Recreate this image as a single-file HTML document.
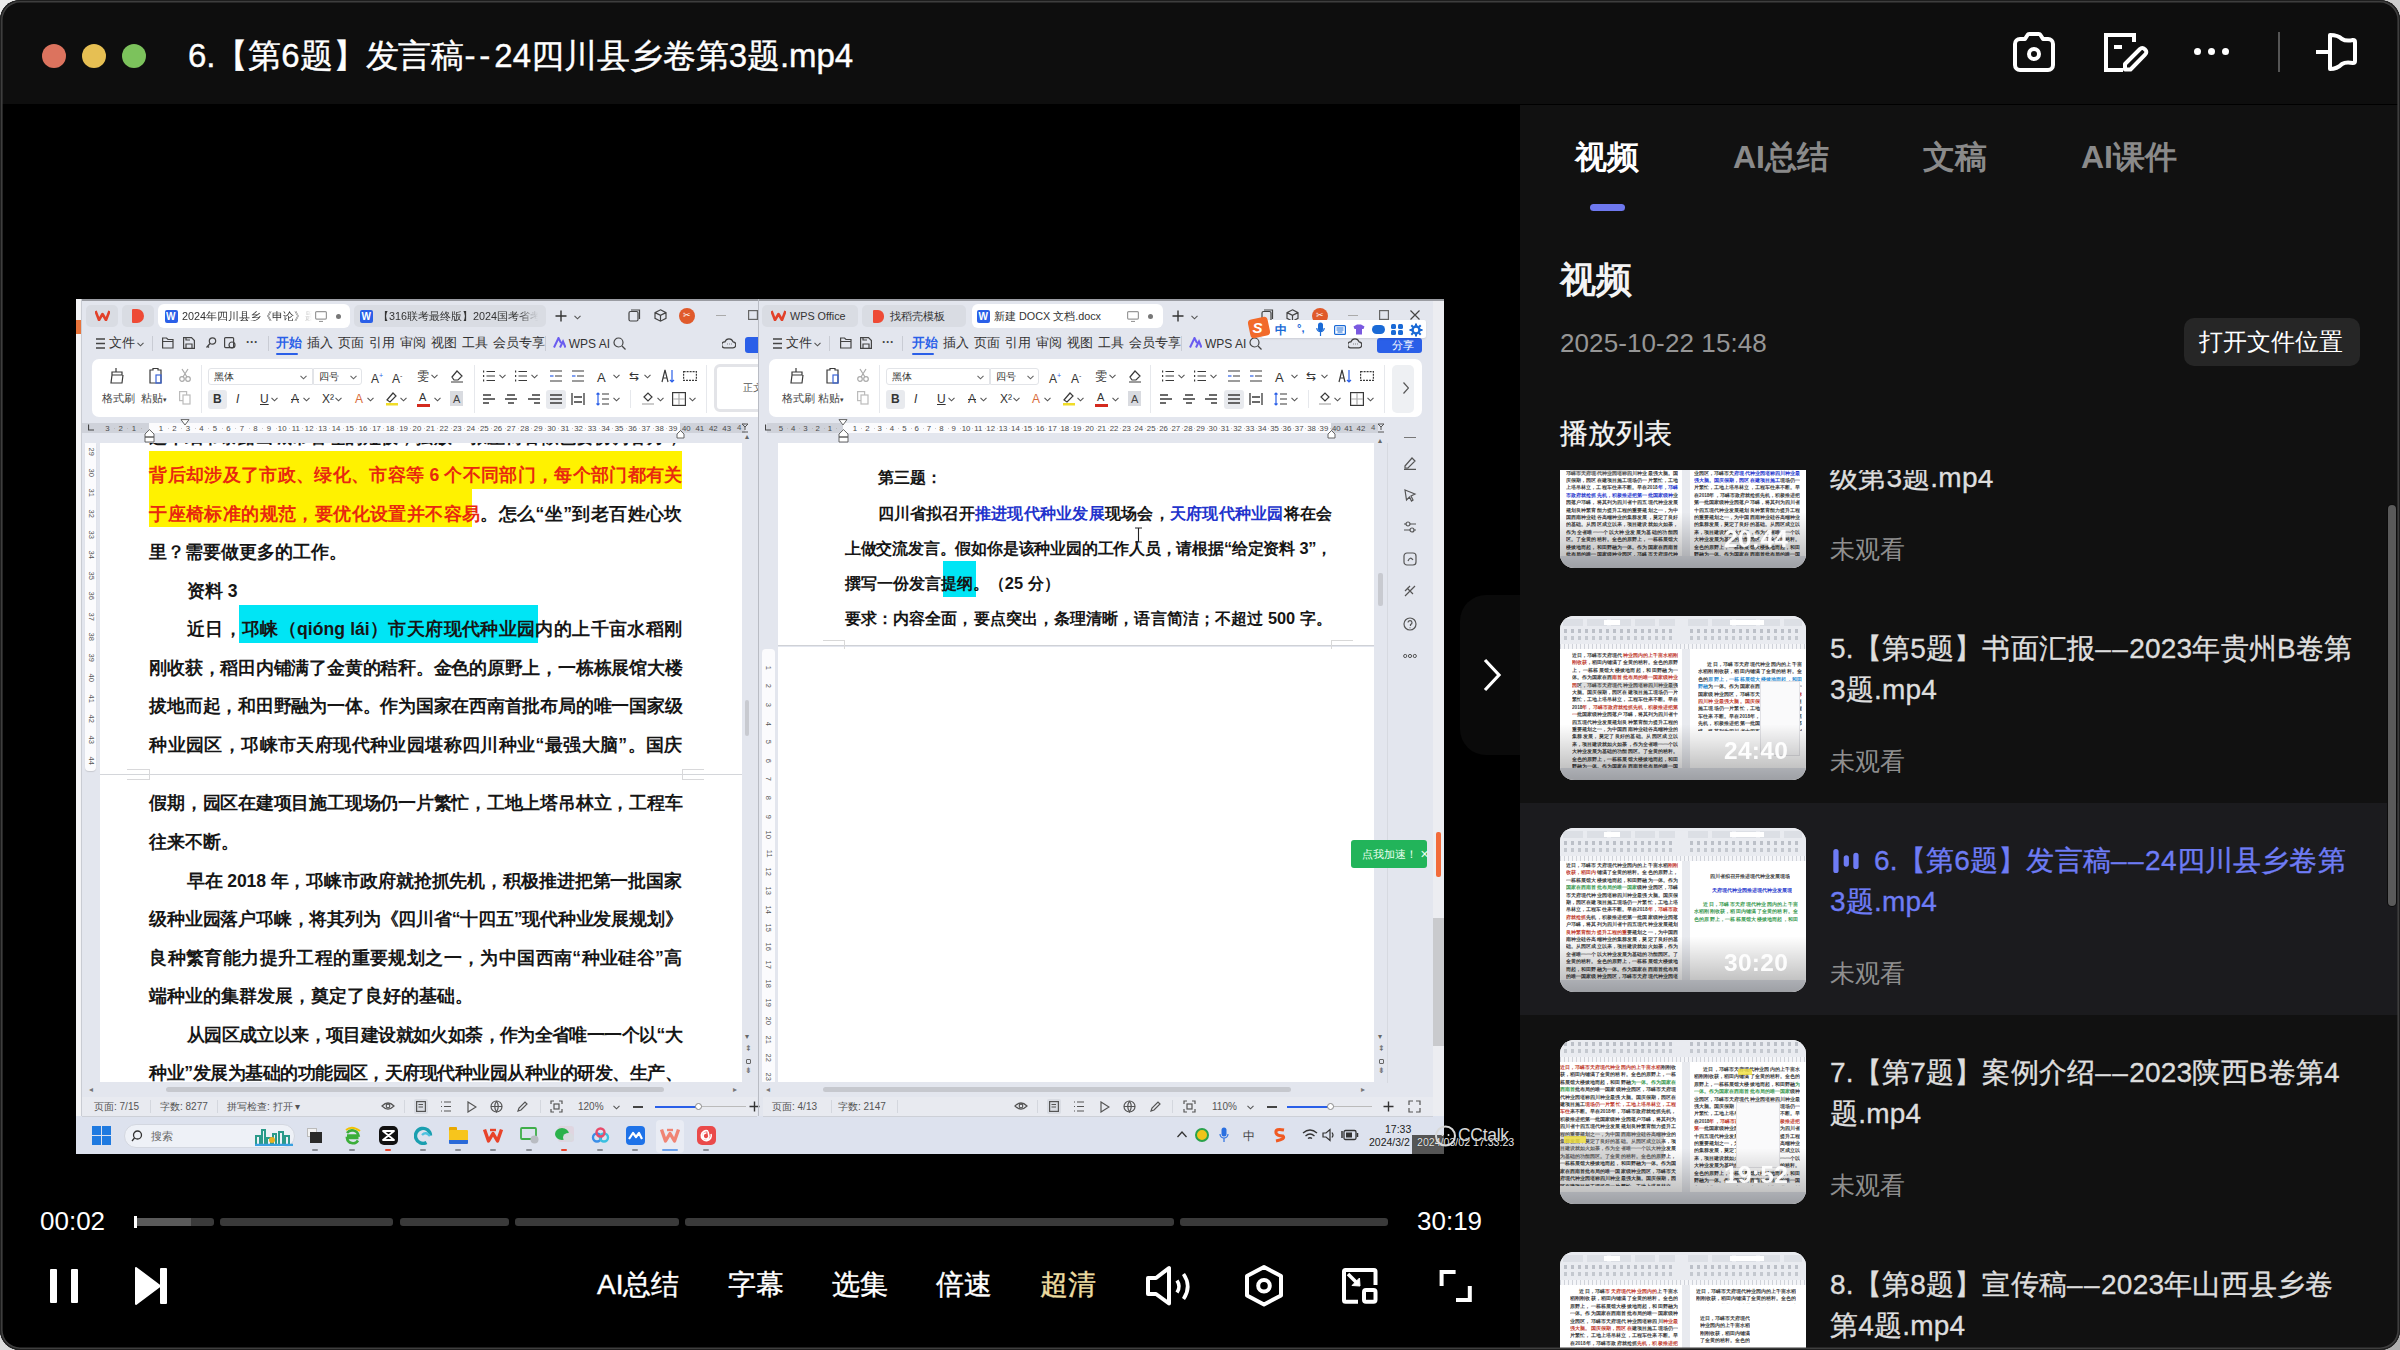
<!DOCTYPE html>
<html><head><meta charset="utf-8">
<style>
*{margin:0;padding:0;box-sizing:border-box}
html,body{width:2400px;height:1350px;overflow:hidden;background:linear-gradient(135deg,#ececec 0%,#d0d0d0 60%,#b0b0b0 100%);font-family:"Liberation Sans",sans-serif}
.a{position:absolute}
#win{position:absolute;left:0;top:0;width:2400px;height:1350px;border-radius:20px;overflow:hidden;background:#000}
#bord{position:absolute;left:0;top:0;width:2400px;height:1350px;border-radius:20px;box-shadow:inset 0 0 0 1px #1e1e1e,inset 0 0 0 2.6px #3e3e3e}
#tb{left:0;top:0;width:2400px;height:104px;background:#0e0e0e}
.dot{width:24px;height:24px;border-radius:50%;top:44px}
#ttl{left:188px;top:34px;font-size:33px;color:#fff;white-space:nowrap;letter-spacing:-0.05px;font-weight:500;-webkit-text-stroke:0.4px #fff}
#side{left:1520px;top:105px;width:880px;height:1245px;background:#111}
.tab{top:136px;font-size:32px;color:#8a8a8a;white-space:nowrap;font-weight:bold}
.ctl{top:1266px;font-size:28px;color:#fff;white-space:nowrap;font-weight:500;-webkit-text-stroke:0.4px currentColor}
.seg{top:1218px;height:8px;background:#3a3a3a;border-radius:3px}

.t{white-space:nowrap}
.tp{overflow:hidden;font-weight:bold;word-break:break-all;text-align:justify}
.item{width:880px;height:212px}
.item.act{background:#1b1b1e}
.th{position:absolute;left:0;top:0;width:246px;height:164px;border-radius:14px;overflow:hidden;background:#fff}
.tbi{height:6px;background:repeating-linear-gradient(90deg,#9aa0aa 0 4px,transparent 4px 9px)}
.ln{background:repeating-linear-gradient(180deg,#3a3a3a 0 3px,transparent 3px 7.4px)}
.lnr{background:repeating-linear-gradient(180deg,#c0392b 0 3px,transparent 3px 7.4px);mix-blend-mode:normal}
.ln2{background:repeating-linear-gradient(180deg,#777 0 2.5px,transparent 2.5px 7.4px)}
.ln3{background:repeating-linear-gradient(180deg,#3a9a50 0 2.5px,transparent 2.5px 7.4px)}
.shade{left:0;top:0;width:246px;height:164px;background:linear-gradient(180deg,rgba(0,0,0,0) 62%,rgba(0,0,0,.45) 100%)}
.dur{left:164px;top:121px;font-size:24.5px;font-weight:bold;color:#fff;opacity:.95;letter-spacing:0.3px}
.ititle{left:310px;top:37px;width:560px;font-size:28px;line-height:41px;color:#dedede;white-space:nowrap;font-weight:500;letter-spacing:0.2px;-webkit-text-stroke:0.35px currentColor}
.dd{letter-spacing:1.5px}
.iwatch{left:310px;top:154px;font-size:25px;color:#8f8f8f}
</style></head><body>
<div id="win">
  <div id="tb" class="a">
    <div class="a dot" style="left:42px;background:#dc735e"></div>
    <div class="a dot" style="left:82px;background:#e6bf53"></div>
    <div class="a dot" style="left:122px;background:#7cc25c"></div>
    <div id="ttl" class="a">6.【第6题】发言稿<span style="letter-spacing:4px">--</span>24四川县乡卷第3题.mp4</div>
  </div>
  <div class="a" style="left:0;top:104px;width:2400px;height:2px;background:#000"></div>
  <!-- video area -->
  <div id="video" class="a" style="left:0;top:106px;width:1520px;height:1244px;background:#000"></div>
  <div id="frame" class="a" style="left:76px;top:299px;width:1368px;height:855px;background:#e4e7ef;overflow:hidden"><div class="a" style="left:6.0px;top:0.0px;width:676.0px;height:817.0px;background:#e3e6ee"></div><div class="a" style="left:10.0px;top:5.7px;width:32.0px;height:22.6px;background:#d9dce3;border-radius:5px"></div><svg class="a" style="left:19.0px;top:11.0px" width="15" height="11" viewBox="0 0 15 11" fill="none" stroke="#3a3a3a" stroke-width="1.2"><path d="M0.5 1 L4 10 L7.5 4 L11 10 L14.5 1" stroke="#e2412a" stroke-width="2.6" stroke-linejoin="round"/></svg><div class="a" style="left:46.0px;top:5.7px;width:32.0px;height:22.6px;background:#d9dce3;border-radius:5px"></div><div class="a" style="left:56.0px;top:10.0px;width:12.0px;height:14.0px;background:#ee4a35;border-radius:1px 7px 7px 1px"></div><div class="a" style="left:82.0px;top:5.0px;width:192.0px;height:24.0px;background:#fff;border-radius:6px"></div><div class="a" style="left:88.5px;top:11.3px;width:13.0px;height:13.0px;background:#2a5fe8;border-radius:2px"></div><div class="a t" style="left:90.0px;top:12.8px;font-size:10.0px;line-height:10.0px;color:#fff;font-weight:bold">W</div><div class="a t" style="left:106.0px;top:11.6px;font-size:10.8px;line-height:10.8px;color:#333;width:130px;overflow:hidden;-webkit-mask-image:linear-gradient(90deg,#000 85%,transparent)">2024年四川县乡《申论》题.docx</div><svg class="a" style="left:239.0px;top:12.0px" width="12" height="11" viewBox="0 0 12 11" fill="none" stroke="#3a3a3a" stroke-width="1.2"><rect x="0.6" y="0.6" width="10.8" height="7.5" rx="1" stroke="#999"/><path d="M4 10.5 H8" stroke="#999"/></svg><div class="a" style="left:260.0px;top:14.5px;width:5.0px;height:5.0px;background:#777;border-radius:50%"></div><div class="a" style="left:278.0px;top:5.7px;width:192.0px;height:22.6px;background:#d9dce3;border-radius:5px"></div><div class="a" style="left:284.0px;top:11.3px;width:13.0px;height:13.0px;background:#2a5fe8;border-radius:2px"></div><div class="a t" style="left:285.5px;top:12.8px;font-size:10.0px;line-height:10.0px;color:#fff;font-weight:bold">W</div><div class="a t" style="left:302.0px;top:11.6px;font-size:10.8px;line-height:10.8px;color:#333;width:160px;overflow:hidden;white-space:nowrap;-webkit-mask-image:linear-gradient(90deg,#000 88%,transparent)">【316联考最终版】2024国考省考金融</div><svg class="a" style="left:479.0px;top:11.0px" width="12" height="12" viewBox="0 0 12 12" fill="none" stroke="#3a3a3a" stroke-width="1.2"><path d="M6 0.5 V11.5 M0.5 6 H11.5" stroke="#333" stroke-width="1.4"/></svg><svg class="a" style="left:498.0px;top:16.0px" width="7" height="5" viewBox="0 0 7 5" fill="none" stroke="#3a3a3a" stroke-width="1.2"><path d="M0.5 0.8 L3.5 3.8 L6.5 0.8" stroke="#555" stroke-width="1.1"/></svg><svg class="a" style="left:552.0px;top:10.0px" width="13" height="13" viewBox="0 0 13 13" fill="none" stroke="#3a3a3a" stroke-width="1.2"><rect x="1" y="2.5" width="9" height="9.5" rx="1.5" stroke="#444"/><path d="M3 1 H11.5 V10" stroke="#444"/></svg><svg class="a" style="left:578.0px;top:10.0px" width="13" height="13" viewBox="0 0 13 13" fill="none" stroke="#3a3a3a" stroke-width="1.2"><path d="M6.5 0.8 L12 3.6 V9.4 L6.5 12.2 L1 9.4 V3.6 Z M1 3.6 L6.5 6.4 L12 3.6 M6.5 6.4 V12.2" stroke="#444"/></svg><div class="a" style="left:603.0px;top:8.5px;width:16.0px;height:16.0px;background:#e05a2b;border-radius:50%"></div><div class="a t" style="left:607.0px;top:12.0px;font-size:9.0px;line-height:9.0px;color:#fff">✂</div><div class="a" style="left:640.0px;top:16.0px;width:10.0px;height:1.2px;background:#aaa"></div><svg class="a" style="left:672.0px;top:11.0px" width="10" height="10" viewBox="0 0 10 10" fill="none" stroke="#3a3a3a" stroke-width="1.2"><rect x="0.6" y="0.6" width="8.8" height="8.8" stroke="#666"/></svg><svg class="a" style="left:20.0px;top:38.5px" width="9" height="11" viewBox="0 0 9 11" fill="none" stroke="#3a3a3a" stroke-width="1.2"><path d="M0 1 H9 M0 5.5 H9 M0 10 H9" stroke="#444" stroke-width="1.3"/></svg><div class="a t" style="left:33.0px;top:38.2px;font-size:12.5px;line-height:12.5px;color:#333">文件</div><svg class="a" style="left:61.0px;top:43.0px" width="7" height="5" viewBox="0 0 7 5" fill="none" stroke="#3a3a3a" stroke-width="1.2"><path d="M0.5 0.8 L3.5 3.8 L6.5 0.8" stroke="#555" stroke-width="1.1"/></svg><div class="a" style="left:76.0px;top:37.0px;width:1.0px;height:15.0px;background:#c9ccd4"></div><svg class="a" style="left:86.0px;top:38.0px" width="12" height="12" viewBox="0 0 12 12" fill="none" stroke="#3a3a3a" stroke-width="1.2"><path d="M0.6 1 H4.5 L6 2.5 H11 V11 H0.6 Z M0.6 4.5 H11" stroke="#444"/></svg><svg class="a" style="left:107.0px;top:38.0px" width="12" height="12" viewBox="0 0 12 12" fill="none" stroke="#3a3a3a" stroke-width="1.2"><path d="M0.6 0.6 H8.5 L11.4 3.5 V11.4 H0.6 Z M3 11.4 V7 H9 V11.4 M3 0.6 V3 H7" stroke="#444"/></svg><svg class="a" style="left:129.0px;top:38.0px" width="12" height="12" viewBox="0 0 12 12" fill="none" stroke="#3a3a3a" stroke-width="1.2"><circle cx="7.5" cy="4" r="3.2" stroke="#444"/><path d="M5 6.5 L1.5 10.5 M2.5 9 L4 10.5" stroke="#444"/></svg><svg class="a" style="left:148.0px;top:38.0px" width="13" height="12" viewBox="0 0 13 12" fill="none" stroke="#3a3a3a" stroke-width="1.2"><rect x="0.6" y="0.6" width="9" height="10" rx="1" stroke="#444"/><circle cx="8" cy="8" r="3" stroke="#444"/></svg><div class="a t" style="left:170.0px;top:37.0px;font-size:12.0px;line-height:12.0px;color:#444;font-weight:bold">···</div><div class="a" style="left:192.0px;top:37.0px;width:1.0px;height:15.0px;background:#c9ccd4"></div><div class="a t" style="left:199.7px;top:38.2px;font-size:12.5px;line-height:12.5px;color:#2a5fe8;font-weight:bold">开始</div><div class="a t" style="left:230.7px;top:38.2px;font-size:12.5px;line-height:12.5px;color:#333">插入</div><div class="a t" style="left:261.7px;top:38.2px;font-size:12.5px;line-height:12.5px;color:#333">页面</div><div class="a t" style="left:292.7px;top:38.2px;font-size:12.5px;line-height:12.5px;color:#333">引用</div><div class="a t" style="left:323.7px;top:38.2px;font-size:12.5px;line-height:12.5px;color:#333">审阅</div><div class="a t" style="left:354.7px;top:38.2px;font-size:12.5px;line-height:12.5px;color:#333">视图</div><div class="a t" style="left:385.7px;top:38.2px;font-size:12.5px;line-height:12.5px;color:#333">工具</div><div class="a t" style="left:416.7px;top:38.2px;font-size:12.5px;line-height:12.5px;color:#333">会员专享</div><div class="a" style="left:199.7px;top:53.8px;width:22.0px;height:2.0px;background:#2a5fe8;border-radius:1px"></div><div class="a" style="left:468.7px;top:37.0px;width:1.0px;height:15.0px;background:#c9ccd4"></div><svg class="a" style="left:476.7px;top:38.0px" width="13" height="11" viewBox="0 0 13 11" fill="none" stroke="#3a3a3a" stroke-width="1.2"><path d="M1 10.5 L5.5 1 L8 6 M7 10.5 L10 4.5 L12.5 10.5" stroke="#6a5cf0" stroke-width="2"/></svg><div class="a t" style="left:492.7px;top:38.5px;font-size:12.0px;line-height:12.0px;color:#333">WPS AI</div><svg class="a" style="left:536.7px;top:38.0px" width="13" height="13" viewBox="0 0 13 13" fill="none" stroke="#3a3a3a" stroke-width="1.2"><circle cx="5.5" cy="5.5" r="4.5" stroke="#444"/><path d="M9 9 L12.5 12.5" stroke="#444"/></svg><svg class="a" style="left:646.0px;top:38.0px" width="14" height="12" viewBox="0 0 14 12" fill="none" stroke="#3a3a3a" stroke-width="1.2"><path d="M3.5 10.8 H10.5 a3 3 0 0 0 0.5 -6 a4.2 4.2 0 0 0 -8 0 a3 3 0 0 0 -0.5 6 Z" stroke="#444"/><path d="M5 7 h0.6 M7 7 h0.6 M9 7 h0.6" stroke="#444"/></svg><div class="a" style="left:669.0px;top:38.0px;width:20.0px;height:16.0px;background:#2a5fe8;border-radius:3px"></div><div class="a" style="left:16.0px;top:60.2px;width:678.0px;height:58.3px;background:#fff;border-radius:7px"></div><svg class="a" style="left:33.0px;top:68.0px" width="16" height="18" viewBox="0 0 16 18" fill="none" stroke="#3a3a3a" stroke-width="1.2"><path d="M7 1 V5 M3 5 H13 V8 H3 Z M3 8 L2 16 H13 L14 8" stroke="#3a3a3a"/></svg><div class="a t" style="left:26.0px;top:94.2px;font-size:10.5px;line-height:10.5px;color:#444">格式刷</div><svg class="a" style="left:72.0px;top:68.0px" width="16" height="18" viewBox="0 0 16 18" fill="none" stroke="#3a3a3a" stroke-width="1.2"><path d="M2 3 H5 V1.5 H10 V3 H13 V16 H2 Z" stroke="#3a3a3a"/><rect x="8" y="8" width="5" height="8" stroke="#3a64d8"/></svg><div class="a t" style="left:65.0px;top:94.2px;font-size:10.5px;line-height:10.5px;color:#444">粘贴<span style="font-size:7px">▾</span></div><svg class="a" style="left:103.0px;top:69.0px" width="12" height="14" viewBox="0 0 12 14" fill="none" stroke="#3a3a3a" stroke-width="1.2"><circle cx="3" cy="11" r="2.3" stroke="#aaa"/><circle cx="9" cy="11" r="2.3" stroke="#aaa"/><path d="M4 9 L9 1 M8 9 L3 1" stroke="#aaa"/></svg><svg class="a" style="left:103.0px;top:92.0px" width="12" height="14" viewBox="0 0 12 14" fill="none" stroke="#3a3a3a" stroke-width="1.2"><rect x="0.6" y="0.6" width="7" height="9" stroke="#bbb"/><rect x="4" y="4" width="7" height="9" stroke="#bbb" fill="#fff"/></svg><div class="a" style="left:125.4px;top:66.0px;width:1.0px;height:48.0px;background:#e6e8ec"></div><div class="a" style="left:132.4px;top:68.7px;width:104.9px;height:17.7px;border:1px solid #e2e4e8;border-radius:3px 0 0 3px"></div><div class="a t" style="left:138.4px;top:72.5px;font-size:10.0px;line-height:10.0px;color:#333">黑体</div><svg class="a" style="left:224.3px;top:76.0px" width="7" height="5" viewBox="0 0 7 5" fill="none" stroke="#3a3a3a" stroke-width="1.2"><path d="M0.5 0.8 L3.5 3.8 L6.5 0.8" stroke="#666" stroke-width="1.1"/></svg><div class="a" style="left:237.3px;top:68.7px;width:49.0px;height:17.7px;border:1px solid #e2e4e8;border-radius:0 3px 3px 0"></div><div class="a t" style="left:243.3px;top:72.5px;font-size:10.0px;line-height:10.0px;color:#333">四号</div><svg class="a" style="left:274.3px;top:76.0px" width="7" height="5" viewBox="0 0 7 5" fill="none" stroke="#3a3a3a" stroke-width="1.2"><path d="M0.5 0.8 L3.5 3.8 L6.5 0.8" stroke="#666" stroke-width="1.1"/></svg><div class="a t" style="left:295.0px;top:71.4px;font-size:12.0px;line-height:12.0px;color:#333">A<sup style="font-size:7px;color:#2a5fe8">+</sup></div><div class="a t" style="left:316.0px;top:71.4px;font-size:12.0px;line-height:12.0px;color:#333">A<sup style="font-size:7px">-</sup></div><div class="a t" style="left:341.0px;top:71.4px;font-size:12.0px;line-height:12.0px;color:#333">雯</div><svg class="a" style="left:355.0px;top:75.4px" width="7" height="5" viewBox="0 0 7 5" fill="none" stroke="#3a3a3a" stroke-width="1.2"><path d="M0.5 0.8 L3.5 3.8 L6.5 0.8" stroke="#555" stroke-width="1.1"/></svg><svg class="a" style="left:374.0px;top:70.0px" width="14" height="14" viewBox="0 0 14 14" fill="none" stroke="#3a3a3a" stroke-width="1.2"><path d="M2 8 L7 2 L12 7 L8 11 H4 Z M1 13 H13" stroke="#3a3a3a"/></svg><div class="a" style="left:398.0px;top:66.0px;width:1.0px;height:48.0px;background:#e6e8ec"></div><svg class="a" style="left:406.0px;top:71.0px" width="14" height="12" viewBox="0 0 14 12" fill="none" stroke="#3a3a3a" stroke-width="1.2"><path d="M1 1.5 h1.2 M1 6 h1.2 M1 10.5 h1.2" stroke="#3a3a3a" stroke-width="1.8"/><path d="M4.5 1.5 H13 M4.5 6 H13 M4.5 10.5 H13" stroke="#3a3a3a"/></svg><svg class="a" style="left:423.0px;top:75.4px" width="7" height="5" viewBox="0 0 7 5" fill="none" stroke="#3a3a3a" stroke-width="1.2"><path d="M0.5 0.8 L3.5 3.8 L6.5 0.8" stroke="#555" stroke-width="1.1"/></svg><svg class="a" style="left:438.0px;top:71.0px" width="14" height="12" viewBox="0 0 14 12" fill="none" stroke="#3a3a3a" stroke-width="1.2"><path d="M1 1.5 h1.2 M1 6 h1.2 M1 10.5 h1.2" stroke="#3a3a3a" stroke-width="1.8"/><path d="M4.5 1.5 H13 M4.5 6 H13 M4.5 10.5 H13" stroke="#3a3a3a"/></svg><svg class="a" style="left:455.0px;top:75.4px" width="7" height="5" viewBox="0 0 7 5" fill="none" stroke="#3a3a3a" stroke-width="1.2"><path d="M0.5 0.8 L3.5 3.8 L6.5 0.8" stroke="#555" stroke-width="1.1"/></svg><svg class="a" style="left:473.0px;top:71.0px" width="14" height="12" viewBox="0 0 14 12" fill="none" stroke="#3a3a3a" stroke-width="1.2"><path d="M1 1 H13 M6 6 H13 M1 11 H13" stroke="#3a3a3a"/><path d="M1 6 H4.5" stroke="#2a5fe8"/></svg><svg class="a" style="left:495.0px;top:71.0px" width="14" height="12" viewBox="0 0 14 12" fill="none" stroke="#3a3a3a" stroke-width="1.2"><path d="M1 1 H13 M6 6 H13 M1 11 H13" stroke="#3a3a3a"/><path d="M1 6 H4.5" stroke="#2a5fe8"/></svg><div class="a t" style="left:521.0px;top:71.9px;font-size:13.0px;line-height:13.0px;color:#333">A</div><svg class="a" style="left:537.0px;top:75.4px" width="7" height="5" viewBox="0 0 7 5" fill="none" stroke="#3a3a3a" stroke-width="1.2"><path d="M0.5 0.8 L3.5 3.8 L6.5 0.8" stroke="#555" stroke-width="1.1"/></svg><div class="a t" style="left:553.0px;top:71.4px;font-size:12.0px;line-height:12.0px;color:#333">⇆</div><svg class="a" style="left:568.0px;top:75.4px" width="7" height="5" viewBox="0 0 7 5" fill="none" stroke="#3a3a3a" stroke-width="1.2"><path d="M0.5 0.8 L3.5 3.8 L6.5 0.8" stroke="#555" stroke-width="1.1"/></svg><svg class="a" style="left:585.0px;top:70.0px" width="14" height="14" viewBox="0 0 14 14" fill="none" stroke="#3a3a3a" stroke-width="1.2"><path d="M1 13 L4 1 L7 13 M2 9 H6" stroke="#3a3a3a"/><path d="M11 1 V13 M9 11 L11 13 L13 11" stroke="#2a5fe8"/></svg><svg class="a" style="left:607.0px;top:72.0px" width="14" height="10" viewBox="0 0 14 10" fill="none" stroke="#3a3a3a" stroke-width="1.2"><rect x="0.6" y="0.6" width="12.8" height="8.8" stroke="#3a3a3a" stroke-dasharray="2 1"/></svg><div class="a" style="left:630.0px;top:66.0px;width:1.0px;height:48.0px;background:#e6e8ec"></div><div class="a" style="left:132.0px;top:90.5px;width:19.0px;height:19.0px;background:#e8eaee;border-radius:3px"></div><div class="a t" style="left:137.0px;top:94.3px;font-size:12.0px;line-height:12.0px;color:#333;font-weight:bold">B</div><div class="a t" style="left:160.0px;top:94.3px;font-size:12.0px;line-height:12.0px;color:#333;font-style:italic">I</div><div class="a t" style="left:184.0px;top:94.3px;font-size:12.0px;line-height:12.0px;color:#333;text-decoration:underline">U</div><svg class="a" style="left:195.0px;top:98.3px" width="7" height="5" viewBox="0 0 7 5" fill="none" stroke="#3a3a3a" stroke-width="1.2"><path d="M0.5 0.8 L3.5 3.8 L6.5 0.8" stroke="#555" stroke-width="1.1"/></svg><div class="a t" style="left:215.0px;top:94.3px;font-size:12.0px;line-height:12.0px;color:#333;text-decoration:line-through">A</div><svg class="a" style="left:227.0px;top:98.3px" width="7" height="5" viewBox="0 0 7 5" fill="none" stroke="#3a3a3a" stroke-width="1.2"><path d="M0.5 0.8 L3.5 3.8 L6.5 0.8" stroke="#555" stroke-width="1.1"/></svg><div class="a t" style="left:246.0px;top:94.3px;font-size:12.0px;line-height:12.0px;color:#333">X²</div><svg class="a" style="left:259.0px;top:98.3px" width="7" height="5" viewBox="0 0 7 5" fill="none" stroke="#3a3a3a" stroke-width="1.2"><path d="M0.5 0.8 L3.5 3.8 L6.5 0.8" stroke="#555" stroke-width="1.1"/></svg><div class="a t" style="left:279.0px;top:94.3px;font-size:12.0px;line-height:12.0px;color:#d86a3a">A</div><svg class="a" style="left:291.0px;top:98.3px" width="7" height="5" viewBox="0 0 7 5" fill="none" stroke="#3a3a3a" stroke-width="1.2"><path d="M0.5 0.8 L3.5 3.8 L6.5 0.8" stroke="#555" stroke-width="1.1"/></svg><svg class="a" style="left:309.0px;top:92.0px" width="14" height="15" viewBox="0 0 14 15" fill="none" stroke="#3a3a3a" stroke-width="1.2"><path d="M2 9 L8 2 L11 5 L5 11 Z" stroke="#3a3a3a"/><rect x="1" y="12" width="12" height="2.5" fill="#f0dc28" stroke="none"/></svg><svg class="a" style="left:324.0px;top:98.3px" width="7" height="5" viewBox="0 0 7 5" fill="none" stroke="#3a3a3a" stroke-width="1.2"><path d="M0.5 0.8 L3.5 3.8 L6.5 0.8" stroke="#555" stroke-width="1.1"/></svg><div class="a t" style="left:343.0px;top:93.3px;font-size:11.0px;line-height:11.0px;color:#333">A</div><div class="a" style="left:341.0px;top:105.0px;width:13.0px;height:3.0px;background:#d42a1e"></div><svg class="a" style="left:358.0px;top:98.3px" width="7" height="5" viewBox="0 0 7 5" fill="none" stroke="#3a3a3a" stroke-width="1.2"><path d="M0.5 0.8 L3.5 3.8 L6.5 0.8" stroke="#555" stroke-width="1.1"/></svg><div class="a" style="left:374.0px;top:92.0px;width:13.0px;height:15.0px;background:#d9dbe0"></div><div class="a t" style="left:377.0px;top:94.8px;font-size:11.0px;line-height:11.0px;color:#444">A</div><svg class="a" style="left:406.0px;top:94.0px" width="14" height="12" viewBox="0 0 14 12" fill="none" stroke="#3a3a3a" stroke-width="1.2"><path d="M1 2 H9 M1 6 H13 M1 10 H7" stroke="#3a3a3a" stroke-width="1.3"/></svg><svg class="a" style="left:428.0px;top:94.0px" width="14" height="12" viewBox="0 0 14 12" fill="none" stroke="#3a3a3a" stroke-width="1.2"><path d="M3 2 H11 M1 6 H13 M4 10 H10" stroke="#3a3a3a" stroke-width="1.3"/></svg><svg class="a" style="left:451.0px;top:94.0px" width="14" height="12" viewBox="0 0 14 12" fill="none" stroke="#3a3a3a" stroke-width="1.2"><path d="M5 2 H13 M1 6 H13 M7 10 H13" stroke="#3a3a3a" stroke-width="1.3"/></svg><div class="a" style="left:470.0px;top:90.5px;width:20.0px;height:19.0px;background:#e8eaee;border-radius:3px"></div><svg class="a" style="left:473.0px;top:94.0px" width="14" height="12" viewBox="0 0 14 12" fill="none" stroke="#3a3a3a" stroke-width="1.2"><path d="M1 2 H13 M1 6 H13 M1 10 H13" stroke="#3a3a3a" stroke-width="1.3"/></svg><svg class="a" style="left:495.0px;top:94.0px" width="14" height="12" viewBox="0 0 14 12" fill="none" stroke="#3a3a3a" stroke-width="1.2"><path d="M1 0 V12 M13 0 V12 M3 4 H11 M3 9 H11" stroke="#3a3a3a" stroke-width="1.3"/></svg><svg class="a" style="left:520.0px;top:93.0px" width="14" height="14" viewBox="0 0 14 14" fill="none" stroke="#3a3a3a" stroke-width="1.2"><path d="M6 2 H13 M6 7 H13 M6 12 H13" stroke="#3a3a3a"/><path d="M2 1 V13 M0.5 2.5 L2 1 L3.5 2.5 M0.5 11.5 L2 13 L3.5 11.5" stroke="#2a5fe8"/></svg><svg class="a" style="left:537.0px;top:98.3px" width="7" height="5" viewBox="0 0 7 5" fill="none" stroke="#3a3a3a" stroke-width="1.2"><path d="M0.5 0.8 L3.5 3.8 L6.5 0.8" stroke="#555" stroke-width="1.1"/></svg><div class="a" style="left:554.0px;top:91.0px;width:1.0px;height:18.0px;background:#e6e8ec"></div><svg class="a" style="left:565.0px;top:92.0px" width="14" height="15" viewBox="0 0 14 15" fill="none" stroke="#3a3a3a" stroke-width="1.2"><path d="M3 6 L7 2 L11 6 L7 10 Z" stroke="#3a3a3a"/><path d="M1 13 H13" stroke="#ccc" stroke-width="2"/></svg><svg class="a" style="left:581.0px;top:98.3px" width="7" height="5" viewBox="0 0 7 5" fill="none" stroke="#3a3a3a" stroke-width="1.2"><path d="M0.5 0.8 L3.5 3.8 L6.5 0.8" stroke="#555" stroke-width="1.1"/></svg><svg class="a" style="left:596.0px;top:93.0px" width="14" height="14" viewBox="0 0 14 14" fill="none" stroke="#3a3a3a" stroke-width="1.2"><rect x="0.6" y="0.6" width="12.8" height="12.8" stroke="#3a3a3a"/><path d="M7 1 V13 M1 7 H13" stroke="#aaa"/></svg><svg class="a" style="left:613.0px;top:98.3px" width="7" height="5" viewBox="0 0 7 5" fill="none" stroke="#3a3a3a" stroke-width="1.2"><path d="M0.5 0.8 L3.5 3.8 L6.5 0.8" stroke="#555" stroke-width="1.1"/></svg><div class="a" style="left:638.0px;top:65.0px;width:60.0px;height:48.0px;border:3px solid #e3e4e8;border-radius:6px;background:#fff"></div><div class="a t" style="left:667.0px;top:84.0px;font-size:10.0px;line-height:10.0px;color:#555;font-family:&#39;Liberation Serif&#39;,serif">正文</div><div class="a" style="left:6.0px;top:123.7px;width:663.0px;height:10.5px;background:#cfd2da"></div><div class="a" style="left:73.3px;top:123.7px;width:530.5px;height:10.5px;background:#fbfbfd"></div><div class="a t" style="left:80.0px;top:125.5px;font-size:7.8px;line-height:7.8px;color:#4a4a4a;width:10px;text-align:center">1</div><div class="a" style="left:91.7px;top:128.5px;width:0.6px;height:1.5px;background:#ccc"></div><div class="a t" style="left:93.5px;top:125.5px;font-size:7.8px;line-height:7.8px;color:#4a4a4a;width:10px;text-align:center">2</div><div class="a" style="left:105.2px;top:128.5px;width:0.6px;height:1.5px;background:#ccc"></div><div class="a t" style="left:106.9px;top:125.5px;font-size:7.8px;line-height:7.8px;color:#4a4a4a;width:10px;text-align:center">3</div><div class="a" style="left:118.7px;top:128.5px;width:0.6px;height:1.5px;background:#ccc"></div><div class="a t" style="left:120.4px;top:125.5px;font-size:7.8px;line-height:7.8px;color:#4a4a4a;width:10px;text-align:center">4</div><div class="a" style="left:132.1px;top:128.5px;width:0.6px;height:1.5px;background:#ccc"></div><div class="a t" style="left:133.9px;top:125.5px;font-size:7.8px;line-height:7.8px;color:#4a4a4a;width:10px;text-align:center">5</div><div class="a" style="left:145.6px;top:128.5px;width:0.6px;height:1.5px;background:#ccc"></div><div class="a t" style="left:147.4px;top:125.5px;font-size:7.8px;line-height:7.8px;color:#4a4a4a;width:10px;text-align:center">6</div><div class="a" style="left:159.1px;top:128.5px;width:0.6px;height:1.5px;background:#ccc"></div><div class="a t" style="left:160.8px;top:125.5px;font-size:7.8px;line-height:7.8px;color:#4a4a4a;width:10px;text-align:center">7</div><div class="a" style="left:172.6px;top:128.5px;width:0.6px;height:1.5px;background:#ccc"></div><div class="a t" style="left:174.3px;top:125.5px;font-size:7.8px;line-height:7.8px;color:#4a4a4a;width:10px;text-align:center">8</div><div class="a" style="left:186.0px;top:128.5px;width:0.6px;height:1.5px;background:#ccc"></div><div class="a t" style="left:187.8px;top:125.5px;font-size:7.8px;line-height:7.8px;color:#4a4a4a;width:10px;text-align:center">9</div><div class="a" style="left:199.5px;top:128.5px;width:0.6px;height:1.5px;background:#ccc"></div><div class="a t" style="left:201.2px;top:125.5px;font-size:7.8px;line-height:7.8px;color:#4a4a4a;width:10px;text-align:center">10</div><div class="a" style="left:213.0px;top:128.5px;width:0.6px;height:1.5px;background:#ccc"></div><div class="a t" style="left:214.7px;top:125.5px;font-size:7.8px;line-height:7.8px;color:#4a4a4a;width:10px;text-align:center">11</div><div class="a" style="left:226.4px;top:128.5px;width:0.6px;height:1.5px;background:#ccc"></div><div class="a t" style="left:228.2px;top:125.5px;font-size:7.8px;line-height:7.8px;color:#4a4a4a;width:10px;text-align:center">12</div><div class="a" style="left:239.9px;top:128.5px;width:0.6px;height:1.5px;background:#ccc"></div><div class="a t" style="left:241.6px;top:125.5px;font-size:7.8px;line-height:7.8px;color:#4a4a4a;width:10px;text-align:center">13</div><div class="a" style="left:253.4px;top:128.5px;width:0.6px;height:1.5px;background:#ccc"></div><div class="a t" style="left:255.1px;top:125.5px;font-size:7.8px;line-height:7.8px;color:#4a4a4a;width:10px;text-align:center">14</div><div class="a" style="left:266.8px;top:128.5px;width:0.6px;height:1.5px;background:#ccc"></div><div class="a t" style="left:268.6px;top:125.5px;font-size:7.8px;line-height:7.8px;color:#4a4a4a;width:10px;text-align:center">15</div><div class="a" style="left:280.3px;top:128.5px;width:0.6px;height:1.5px;background:#ccc"></div><div class="a t" style="left:282.1px;top:125.5px;font-size:7.8px;line-height:7.8px;color:#4a4a4a;width:10px;text-align:center">16</div><div class="a" style="left:293.8px;top:128.5px;width:0.6px;height:1.5px;background:#ccc"></div><div class="a t" style="left:295.5px;top:125.5px;font-size:7.8px;line-height:7.8px;color:#4a4a4a;width:10px;text-align:center">17</div><div class="a" style="left:307.3px;top:128.5px;width:0.6px;height:1.5px;background:#ccc"></div><div class="a t" style="left:309.0px;top:125.5px;font-size:7.8px;line-height:7.8px;color:#4a4a4a;width:10px;text-align:center">18</div><div class="a" style="left:320.7px;top:128.5px;width:0.6px;height:1.5px;background:#ccc"></div><div class="a t" style="left:322.5px;top:125.5px;font-size:7.8px;line-height:7.8px;color:#4a4a4a;width:10px;text-align:center">19</div><div class="a" style="left:334.2px;top:128.5px;width:0.6px;height:1.5px;background:#ccc"></div><div class="a t" style="left:335.9px;top:125.5px;font-size:7.8px;line-height:7.8px;color:#4a4a4a;width:10px;text-align:center">20</div><div class="a" style="left:347.7px;top:128.5px;width:0.6px;height:1.5px;background:#ccc"></div><div class="a t" style="left:349.4px;top:125.5px;font-size:7.8px;line-height:7.8px;color:#4a4a4a;width:10px;text-align:center">21</div><div class="a" style="left:361.1px;top:128.5px;width:0.6px;height:1.5px;background:#ccc"></div><div class="a t" style="left:362.9px;top:125.5px;font-size:7.8px;line-height:7.8px;color:#4a4a4a;width:10px;text-align:center">22</div><div class="a" style="left:374.6px;top:128.5px;width:0.6px;height:1.5px;background:#ccc"></div><div class="a t" style="left:376.3px;top:125.5px;font-size:7.8px;line-height:7.8px;color:#4a4a4a;width:10px;text-align:center">23</div><div class="a" style="left:388.1px;top:128.5px;width:0.6px;height:1.5px;background:#ccc"></div><div class="a t" style="left:389.8px;top:125.5px;font-size:7.8px;line-height:7.8px;color:#4a4a4a;width:10px;text-align:center">24</div><div class="a" style="left:401.5px;top:128.5px;width:0.6px;height:1.5px;background:#ccc"></div><div class="a t" style="left:403.3px;top:125.5px;font-size:7.8px;line-height:7.8px;color:#4a4a4a;width:10px;text-align:center">25</div><div class="a" style="left:415.0px;top:128.5px;width:0.6px;height:1.5px;background:#ccc"></div><div class="a t" style="left:416.8px;top:125.5px;font-size:7.8px;line-height:7.8px;color:#4a4a4a;width:10px;text-align:center">26</div><div class="a" style="left:428.5px;top:128.5px;width:0.6px;height:1.5px;background:#ccc"></div><div class="a t" style="left:430.2px;top:125.5px;font-size:7.8px;line-height:7.8px;color:#4a4a4a;width:10px;text-align:center">27</div><div class="a" style="left:442.0px;top:128.5px;width:0.6px;height:1.5px;background:#ccc"></div><div class="a t" style="left:443.7px;top:125.5px;font-size:7.8px;line-height:7.8px;color:#4a4a4a;width:10px;text-align:center">28</div><div class="a" style="left:455.4px;top:128.5px;width:0.6px;height:1.5px;background:#ccc"></div><div class="a t" style="left:457.2px;top:125.5px;font-size:7.8px;line-height:7.8px;color:#4a4a4a;width:10px;text-align:center">29</div><div class="a" style="left:468.9px;top:128.5px;width:0.6px;height:1.5px;background:#ccc"></div><div class="a t" style="left:470.6px;top:125.5px;font-size:7.8px;line-height:7.8px;color:#4a4a4a;width:10px;text-align:center">30</div><div class="a" style="left:482.4px;top:128.5px;width:0.6px;height:1.5px;background:#ccc"></div><div class="a t" style="left:484.1px;top:125.5px;font-size:7.8px;line-height:7.8px;color:#4a4a4a;width:10px;text-align:center">31</div><div class="a" style="left:495.8px;top:128.5px;width:0.6px;height:1.5px;background:#ccc"></div><div class="a t" style="left:497.6px;top:125.5px;font-size:7.8px;line-height:7.8px;color:#4a4a4a;width:10px;text-align:center">32</div><div class="a" style="left:509.3px;top:128.5px;width:0.6px;height:1.5px;background:#ccc"></div><div class="a t" style="left:511.0px;top:125.5px;font-size:7.8px;line-height:7.8px;color:#4a4a4a;width:10px;text-align:center">33</div><div class="a" style="left:522.8px;top:128.5px;width:0.6px;height:1.5px;background:#ccc"></div><div class="a t" style="left:524.5px;top:125.5px;font-size:7.8px;line-height:7.8px;color:#4a4a4a;width:10px;text-align:center">34</div><div class="a" style="left:536.2px;top:128.5px;width:0.6px;height:1.5px;background:#ccc"></div><div class="a t" style="left:538.0px;top:125.5px;font-size:7.8px;line-height:7.8px;color:#4a4a4a;width:10px;text-align:center">35</div><div class="a" style="left:549.7px;top:128.5px;width:0.6px;height:1.5px;background:#ccc"></div><div class="a t" style="left:551.5px;top:125.5px;font-size:7.8px;line-height:7.8px;color:#4a4a4a;width:10px;text-align:center">36</div><div class="a" style="left:563.2px;top:128.5px;width:0.6px;height:1.5px;background:#ccc"></div><div class="a t" style="left:564.9px;top:125.5px;font-size:7.8px;line-height:7.8px;color:#4a4a4a;width:10px;text-align:center">37</div><div class="a" style="left:576.7px;top:128.5px;width:0.6px;height:1.5px;background:#ccc"></div><div class="a t" style="left:578.4px;top:125.5px;font-size:7.8px;line-height:7.8px;color:#4a4a4a;width:10px;text-align:center">38</div><div class="a" style="left:590.1px;top:128.5px;width:0.6px;height:1.5px;background:#ccc"></div><div class="a t" style="left:591.9px;top:125.5px;font-size:7.8px;line-height:7.8px;color:#4a4a4a;width:10px;text-align:center">39</div><div class="a" style="left:603.6px;top:128.5px;width:0.6px;height:1.5px;background:#ccc"></div><div class="a t" style="left:605.3px;top:125.5px;font-size:7.8px;line-height:7.8px;color:#4a4a4a;width:10px;text-align:center">40</div><div class="a" style="left:617.1px;top:128.5px;width:0.6px;height:1.5px;background:#ccc"></div><div class="a t" style="left:618.8px;top:125.5px;font-size:7.8px;line-height:7.8px;color:#4a4a4a;width:10px;text-align:center">41</div><div class="a" style="left:630.5px;top:128.5px;width:0.6px;height:1.5px;background:#ccc"></div><div class="a t" style="left:632.3px;top:125.5px;font-size:7.8px;line-height:7.8px;color:#4a4a4a;width:10px;text-align:center">42</div><div class="a" style="left:644.0px;top:128.5px;width:0.6px;height:1.5px;background:#ccc"></div><div class="a t" style="left:645.7px;top:125.5px;font-size:7.8px;line-height:7.8px;color:#4a4a4a;width:10px;text-align:center">43</div><div class="a t" style="left:53.0px;top:125.5px;font-size:7.8px;line-height:7.8px;color:#4a4a4a;width:10px;text-align:center">1</div><div class="a" style="left:64.7px;top:128.5px;width:0.6px;height:1.5px;background:#bbb"></div><div class="a t" style="left:39.7px;top:125.5px;font-size:7.8px;line-height:7.8px;color:#4a4a4a;width:10px;text-align:center">2</div><div class="a" style="left:51.4px;top:128.5px;width:0.6px;height:1.5px;background:#bbb"></div><div class="a t" style="left:26.4px;top:125.5px;font-size:7.8px;line-height:7.8px;color:#4a4a4a;width:10px;text-align:center">3</div><div class="a" style="left:38.1px;top:128.5px;width:0.6px;height:1.5px;background:#bbb"></div><svg class="a" style="left:12.0px;top:125.0px" width="7" height="7" viewBox="0 0 7 7" fill="none" stroke="#3a3a3a" stroke-width="1.2"><path d="M0.5 0.5 V6 H6" stroke="#444" stroke-width="1.2"/></svg><div class="a t" style="left:661.0px;top:125.3px;font-size:7.8px;line-height:7.8px;color:#555">4</div><svg class="a" style="left:665.0px;top:124.0px" width="8" height="10" viewBox="0 0 8 10" fill="none" stroke="#3a3a3a" stroke-width="1.2"><path d="M1 1 H7 L4 4 Z M4 4 V7 M1 9 H7" stroke="#555" stroke-width="1"/></svg><svg class="a" style="left:104.0px;top:120.0px" width="10" height="7" viewBox="0 0 10 7" fill="none" stroke="#3a3a3a" stroke-width="1.2"><path d="M1 0.6 H9 L5 6 Z" fill="#fff" stroke="#555" stroke-width="0.9"/></svg><svg class="a" style="left:600.0px;top:131.0px" width="9" height="9" viewBox="0 0 9 9" fill="none" stroke="#3a3a3a" stroke-width="1.2"><path d="M4.5 0.6 L8 4 V8 H1 V4 Z" fill="#fff" stroke="#555" stroke-width="0.9"/></svg><div class="a" style="left:6.0px;top:134.2px;width:675.0px;height:10.0px;background:#e3e6ee"></div><div class="a" style="left:683.0px;top:0.0px;width:674.0px;height:817.0px;background:#e3e6ee"></div><div class="a" style="left:686.0px;top:5.7px;width:96.0px;height:22.6px;background:#d9dce3;border-radius:5px"></div><svg class="a" style="left:695.0px;top:11.0px" width="15" height="11" viewBox="0 0 15 11" fill="none" stroke="#3a3a3a" stroke-width="1.2"><path d="M0.5 1 L4 10 L7.5 4 L11 10 L14.5 1" stroke="#e2412a" stroke-width="2.6" stroke-linejoin="round"/></svg><div class="a t" style="left:714.0px;top:11.6px;font-size:10.8px;line-height:10.8px;color:#333">WPS Office</div><div class="a" style="left:786.0px;top:5.7px;width:104.0px;height:22.6px;background:#d9dce3;border-radius:5px"></div><div class="a" style="left:797.0px;top:10.5px;width:11.0px;height:13.0px;background:#ee4a35;border-radius:1px 6px 6px 1px"></div><div class="a t" style="left:814.0px;top:11.6px;font-size:10.8px;line-height:10.8px;color:#333">找稻壳模板</div><div class="a" style="left:895.6px;top:5.0px;width:191.0px;height:24.0px;background:#fff;border-radius:6px"></div><div class="a" style="left:901.0px;top:11.3px;width:13.0px;height:13.0px;background:#2a5fe8;border-radius:2px"></div><div class="a t" style="left:902.5px;top:12.8px;font-size:10.0px;line-height:10.0px;color:#fff;font-weight:bold">W</div><div class="a t" style="left:918.0px;top:11.6px;font-size:10.8px;line-height:10.8px;color:#333">新建 DOCX 文档.docx</div><svg class="a" style="left:1051.0px;top:12.0px" width="12" height="11" viewBox="0 0 12 11" fill="none" stroke="#3a3a3a" stroke-width="1.2"><rect x="0.6" y="0.6" width="10.8" height="7.5" rx="1" stroke="#999"/><path d="M4 10.5 H8" stroke="#999"/></svg><div class="a" style="left:1072.0px;top:14.5px;width:5.0px;height:5.0px;background:#777;border-radius:50%"></div><svg class="a" style="left:1096.0px;top:11.0px" width="12" height="12" viewBox="0 0 12 12" fill="none" stroke="#3a3a3a" stroke-width="1.2"><path d="M6 0.5 V11.5 M0.5 6 H11.5" stroke="#333" stroke-width="1.4"/></svg><svg class="a" style="left:1115.0px;top:16.0px" width="7" height="5" viewBox="0 0 7 5" fill="none" stroke="#3a3a3a" stroke-width="1.2"><path d="M0.5 0.8 L3.5 3.8 L6.5 0.8" stroke="#555" stroke-width="1.1"/></svg><svg class="a" style="left:1185.0px;top:10.0px" width="13" height="13" viewBox="0 0 13 13" fill="none" stroke="#3a3a3a" stroke-width="1.2"><rect x="1" y="2.5" width="9" height="9.5" rx="1.5" stroke="#444"/><path d="M3 1 H11.5 V10" stroke="#444"/></svg><svg class="a" style="left:1210.0px;top:10.0px" width="13" height="13" viewBox="0 0 13 13" fill="none" stroke="#3a3a3a" stroke-width="1.2"><path d="M6.5 0.8 L12 3.6 V9.4 L6.5 12.2 L1 9.4 V3.6 Z M1 3.6 L6.5 6.4 L12 3.6 M6.5 6.4 V12.2" stroke="#444"/></svg><div class="a" style="left:1236.0px;top:8.5px;width:16.0px;height:16.0px;background:#e05a2b;border-radius:50%"></div><div class="a t" style="left:1240.0px;top:12.0px;font-size:9.0px;line-height:9.0px;color:#fff">✂</div><div class="a" style="left:1272.0px;top:16.0px;width:10.0px;height:1.2px;background:#aaa"></div><svg class="a" style="left:1303.0px;top:11.0px" width="10" height="10" viewBox="0 0 10 10" fill="none" stroke="#3a3a3a" stroke-width="1.2"><rect x="0.6" y="0.6" width="8.8" height="8.8" stroke="#666"/></svg><svg class="a" style="left:1334.0px;top:11.0px" width="10" height="10" viewBox="0 0 10 10" fill="none" stroke="#3a3a3a" stroke-width="1.2"><path d="M0.5 0.5 L9.5 9.5 M9.5 0.5 L0.5 9.5" stroke="#444"/></svg><svg class="a" style="left:697.0px;top:38.5px" width="9" height="11" viewBox="0 0 9 11" fill="none" stroke="#3a3a3a" stroke-width="1.2"><path d="M0 1 H9 M0 5.5 H9 M0 10 H9" stroke="#444" stroke-width="1.3"/></svg><div class="a t" style="left:710.0px;top:38.2px;font-size:12.5px;line-height:12.5px;color:#333">文件</div><svg class="a" style="left:738.0px;top:43.0px" width="7" height="5" viewBox="0 0 7 5" fill="none" stroke="#3a3a3a" stroke-width="1.2"><path d="M0.5 0.8 L3.5 3.8 L6.5 0.8" stroke="#555" stroke-width="1.1"/></svg><div class="a" style="left:753.0px;top:37.0px;width:1.0px;height:15.0px;background:#c9ccd4"></div><svg class="a" style="left:764.0px;top:38.0px" width="12" height="12" viewBox="0 0 12 12" fill="none" stroke="#3a3a3a" stroke-width="1.2"><path d="M0.6 1 H4.5 L6 2.5 H11 V11 H0.6 Z M0.6 4.5 H11" stroke="#444"/></svg><svg class="a" style="left:784.0px;top:38.0px" width="12" height="12" viewBox="0 0 12 12" fill="none" stroke="#3a3a3a" stroke-width="1.2"><path d="M0.6 0.6 H8.5 L11.4 3.5 V11.4 H0.6 Z M3 11.4 V7 H9 V11.4 M3 0.6 V3 H7" stroke="#444"/></svg><div class="a t" style="left:806.0px;top:37.0px;font-size:12.0px;line-height:12.0px;color:#444;font-weight:bold">···</div><div class="a" style="left:826.0px;top:37.0px;width:1.0px;height:15.0px;background:#c9ccd4"></div><div class="a t" style="left:836.0px;top:38.2px;font-size:12.5px;line-height:12.5px;color:#2a5fe8;font-weight:bold">开始</div><div class="a t" style="left:867.0px;top:38.2px;font-size:12.5px;line-height:12.5px;color:#333">插入</div><div class="a t" style="left:898.0px;top:38.2px;font-size:12.5px;line-height:12.5px;color:#333">页面</div><div class="a t" style="left:929.0px;top:38.2px;font-size:12.5px;line-height:12.5px;color:#333">引用</div><div class="a t" style="left:960.0px;top:38.2px;font-size:12.5px;line-height:12.5px;color:#333">审阅</div><div class="a t" style="left:991.0px;top:38.2px;font-size:12.5px;line-height:12.5px;color:#333">视图</div><div class="a t" style="left:1022.0px;top:38.2px;font-size:12.5px;line-height:12.5px;color:#333">工具</div><div class="a t" style="left:1053.0px;top:38.2px;font-size:12.5px;line-height:12.5px;color:#333">会员专享</div><div class="a" style="left:836.0px;top:53.8px;width:22.0px;height:2.0px;background:#2a5fe8;border-radius:1px"></div><div class="a" style="left:1105.0px;top:37.0px;width:1.0px;height:15.0px;background:#c9ccd4"></div><svg class="a" style="left:1113.0px;top:38.0px" width="13" height="11" viewBox="0 0 13 11" fill="none" stroke="#3a3a3a" stroke-width="1.2"><path d="M1 10.5 L5.5 1 L8 6 M7 10.5 L10 4.5 L12.5 10.5" stroke="#6a5cf0" stroke-width="2"/></svg><div class="a t" style="left:1129.0px;top:38.5px;font-size:12.0px;line-height:12.0px;color:#333">WPS AI</div><svg class="a" style="left:1173.0px;top:38.0px" width="13" height="13" viewBox="0 0 13 13" fill="none" stroke="#3a3a3a" stroke-width="1.2"><circle cx="5.5" cy="5.5" r="4.5" stroke="#444"/><path d="M9 9 L12.5 12.5" stroke="#444"/></svg><svg class="a" style="left:1272.0px;top:38.0px" width="14" height="12" viewBox="0 0 14 12" fill="none" stroke="#3a3a3a" stroke-width="1.2"><path d="M3.5 10.8 H10.5 a3 3 0 0 0 0.5 -6 a4.2 4.2 0 0 0 -8 0 a3 3 0 0 0 -0.5 6 Z" stroke="#444"/><path d="M5 7 h0.6 M7 7 h0.6 M9 7 h0.6" stroke="#444"/></svg><div class="a" style="left:1301.0px;top:39.0px;width:45.0px;height:15.0px;background:#2a5fe8;border-radius:3px"></div><div class="a t" style="left:1316.0px;top:41.0px;font-size:11.0px;line-height:11.0px;color:#fff">分享</div><div class="a" style="left:693.0px;top:60.2px;width:653.0px;height:58.3px;background:#fff;border-radius:7px"></div><svg class="a" style="left:713.0px;top:68.0px" width="16" height="18" viewBox="0 0 16 18" fill="none" stroke="#3a3a3a" stroke-width="1.2"><path d="M7 1 V5 M3 5 H13 V8 H3 Z M3 8 L2 16 H13 L14 8" stroke="#3a3a3a"/></svg><div class="a t" style="left:706.0px;top:94.2px;font-size:10.5px;line-height:10.5px;color:#444">格式刷</div><svg class="a" style="left:749.0px;top:68.0px" width="16" height="18" viewBox="0 0 16 18" fill="none" stroke="#3a3a3a" stroke-width="1.2"><path d="M2 3 H5 V1.5 H10 V3 H13 V16 H2 Z" stroke="#3a3a3a"/><rect x="8" y="8" width="5" height="8" stroke="#3a64d8"/></svg><div class="a t" style="left:742.0px;top:94.2px;font-size:10.5px;line-height:10.5px;color:#444">粘贴<span style="font-size:7px">▾</span></div><svg class="a" style="left:781.0px;top:69.0px" width="12" height="14" viewBox="0 0 12 14" fill="none" stroke="#3a3a3a" stroke-width="1.2"><circle cx="3" cy="11" r="2.3" stroke="#aaa"/><circle cx="9" cy="11" r="2.3" stroke="#aaa"/><path d="M4 9 L9 1 M8 9 L3 1" stroke="#aaa"/></svg><svg class="a" style="left:781.0px;top:92.0px" width="12" height="14" viewBox="0 0 12 14" fill="none" stroke="#3a3a3a" stroke-width="1.2"><rect x="0.6" y="0.6" width="7" height="9" stroke="#bbb"/><rect x="4" y="4" width="7" height="9" stroke="#bbb" fill="#fff"/></svg><div class="a" style="left:803.0px;top:66.0px;width:1.0px;height:48.0px;background:#e6e8ec"></div><div class="a" style="left:810.0px;top:68.7px;width:104.0px;height:17.7px;border:1px solid #e2e4e8;border-radius:3px 0 0 3px"></div><div class="a t" style="left:816.0px;top:72.5px;font-size:10.0px;line-height:10.0px;color:#333">黑体</div><svg class="a" style="left:901.0px;top:76.0px" width="7" height="5" viewBox="0 0 7 5" fill="none" stroke="#3a3a3a" stroke-width="1.2"><path d="M0.5 0.8 L3.5 3.8 L6.5 0.8" stroke="#666" stroke-width="1.1"/></svg><div class="a" style="left:914.0px;top:68.7px;width:49.0px;height:17.7px;border:1px solid #e2e4e8;border-radius:0 3px 3px 0"></div><div class="a t" style="left:920.0px;top:72.5px;font-size:10.0px;line-height:10.0px;color:#333">四号</div><svg class="a" style="left:951.0px;top:76.0px" width="7" height="5" viewBox="0 0 7 5" fill="none" stroke="#3a3a3a" stroke-width="1.2"><path d="M0.5 0.8 L3.5 3.8 L6.5 0.8" stroke="#666" stroke-width="1.1"/></svg><div class="a t" style="left:973.0px;top:71.4px;font-size:12.0px;line-height:12.0px;color:#333">A<sup style="font-size:7px;color:#2a5fe8">+</sup></div><div class="a t" style="left:995.0px;top:71.4px;font-size:12.0px;line-height:12.0px;color:#333">A<sup style="font-size:7px">-</sup></div><div class="a t" style="left:1019.0px;top:71.4px;font-size:12.0px;line-height:12.0px;color:#333">雯</div><svg class="a" style="left:1033.0px;top:75.4px" width="7" height="5" viewBox="0 0 7 5" fill="none" stroke="#3a3a3a" stroke-width="1.2"><path d="M0.5 0.8 L3.5 3.8 L6.5 0.8" stroke="#555" stroke-width="1.1"/></svg><svg class="a" style="left:1052.0px;top:70.0px" width="14" height="14" viewBox="0 0 14 14" fill="none" stroke="#3a3a3a" stroke-width="1.2"><path d="M2 8 L7 2 L12 7 L8 11 H4 Z M1 13 H13" stroke="#3a3a3a"/></svg><div class="a" style="left:1074.0px;top:66.0px;width:1.0px;height:48.0px;background:#e6e8ec"></div><svg class="a" style="left:1085.0px;top:71.0px" width="14" height="12" viewBox="0 0 14 12" fill="none" stroke="#3a3a3a" stroke-width="1.2"><path d="M1 1.5 h1.2 M1 6 h1.2 M1 10.5 h1.2" stroke="#3a3a3a" stroke-width="1.8"/><path d="M4.5 1.5 H13 M4.5 6 H13 M4.5 10.5 H13" stroke="#3a3a3a"/></svg><svg class="a" style="left:1102.0px;top:75.4px" width="7" height="5" viewBox="0 0 7 5" fill="none" stroke="#3a3a3a" stroke-width="1.2"><path d="M0.5 0.8 L3.5 3.8 L6.5 0.8" stroke="#555" stroke-width="1.1"/></svg><svg class="a" style="left:1117.0px;top:71.0px" width="14" height="12" viewBox="0 0 14 12" fill="none" stroke="#3a3a3a" stroke-width="1.2"><path d="M1 1.5 h1.2 M1 6 h1.2 M1 10.5 h1.2" stroke="#3a3a3a" stroke-width="1.8"/><path d="M4.5 1.5 H13 M4.5 6 H13 M4.5 10.5 H13" stroke="#3a3a3a"/></svg><svg class="a" style="left:1134.0px;top:75.4px" width="7" height="5" viewBox="0 0 7 5" fill="none" stroke="#3a3a3a" stroke-width="1.2"><path d="M0.5 0.8 L3.5 3.8 L6.5 0.8" stroke="#555" stroke-width="1.1"/></svg><svg class="a" style="left:1151.0px;top:71.0px" width="14" height="12" viewBox="0 0 14 12" fill="none" stroke="#3a3a3a" stroke-width="1.2"><path d="M1 1 H13 M6 6 H13 M1 11 H13" stroke="#3a3a3a"/><path d="M1 6 H4.5" stroke="#2a5fe8"/></svg><svg class="a" style="left:1173.0px;top:71.0px" width="14" height="12" viewBox="0 0 14 12" fill="none" stroke="#3a3a3a" stroke-width="1.2"><path d="M1 1 H13 M6 6 H13 M1 11 H13" stroke="#3a3a3a"/><path d="M1 6 H4.5" stroke="#2a5fe8"/></svg><div class="a t" style="left:1199.0px;top:71.9px;font-size:13.0px;line-height:13.0px;color:#333">A</div><svg class="a" style="left:1215.0px;top:75.4px" width="7" height="5" viewBox="0 0 7 5" fill="none" stroke="#3a3a3a" stroke-width="1.2"><path d="M0.5 0.8 L3.5 3.8 L6.5 0.8" stroke="#555" stroke-width="1.1"/></svg><div class="a t" style="left:1230.0px;top:71.4px;font-size:12.0px;line-height:12.0px;color:#333">⇆</div><svg class="a" style="left:1245.0px;top:75.4px" width="7" height="5" viewBox="0 0 7 5" fill="none" stroke="#3a3a3a" stroke-width="1.2"><path d="M0.5 0.8 L3.5 3.8 L6.5 0.8" stroke="#555" stroke-width="1.1"/></svg><svg class="a" style="left:1262.0px;top:70.0px" width="14" height="14" viewBox="0 0 14 14" fill="none" stroke="#3a3a3a" stroke-width="1.2"><path d="M1 13 L4 1 L7 13 M2 9 H6" stroke="#3a3a3a"/><path d="M11 1 V13 M9 11 L11 13 L13 11" stroke="#2a5fe8"/></svg><svg class="a" style="left:1284.0px;top:72.0px" width="14" height="10" viewBox="0 0 14 10" fill="none" stroke="#3a3a3a" stroke-width="1.2"><rect x="0.6" y="0.6" width="12.8" height="8.8" stroke="#3a3a3a" stroke-dasharray="2 1"/></svg><div class="a" style="left:1308.0px;top:66.0px;width:1.0px;height:48.0px;background:#e6e8ec"></div><div class="a" style="left:810.0px;top:90.5px;width:19.0px;height:19.0px;background:#e8eaee;border-radius:3px"></div><div class="a t" style="left:815.0px;top:94.3px;font-size:12.0px;line-height:12.0px;color:#333;font-weight:bold">B</div><div class="a t" style="left:838.0px;top:94.3px;font-size:12.0px;line-height:12.0px;color:#333;font-style:italic">I</div><div class="a t" style="left:861.0px;top:94.3px;font-size:12.0px;line-height:12.0px;color:#333;text-decoration:underline">U</div><svg class="a" style="left:872.0px;top:98.3px" width="7" height="5" viewBox="0 0 7 5" fill="none" stroke="#3a3a3a" stroke-width="1.2"><path d="M0.5 0.8 L3.5 3.8 L6.5 0.8" stroke="#555" stroke-width="1.1"/></svg><div class="a t" style="left:892.0px;top:94.3px;font-size:12.0px;line-height:12.0px;color:#333;text-decoration:line-through">A</div><svg class="a" style="left:904.0px;top:98.3px" width="7" height="5" viewBox="0 0 7 5" fill="none" stroke="#3a3a3a" stroke-width="1.2"><path d="M0.5 0.8 L3.5 3.8 L6.5 0.8" stroke="#555" stroke-width="1.1"/></svg><div class="a t" style="left:924.0px;top:94.3px;font-size:12.0px;line-height:12.0px;color:#333">X²</div><svg class="a" style="left:937.0px;top:98.3px" width="7" height="5" viewBox="0 0 7 5" fill="none" stroke="#3a3a3a" stroke-width="1.2"><path d="M0.5 0.8 L3.5 3.8 L6.5 0.8" stroke="#555" stroke-width="1.1"/></svg><div class="a t" style="left:956.0px;top:94.3px;font-size:12.0px;line-height:12.0px;color:#d86a3a">A</div><svg class="a" style="left:968.0px;top:98.3px" width="7" height="5" viewBox="0 0 7 5" fill="none" stroke="#3a3a3a" stroke-width="1.2"><path d="M0.5 0.8 L3.5 3.8 L6.5 0.8" stroke="#555" stroke-width="1.1"/></svg><svg class="a" style="left:986.0px;top:92.0px" width="14" height="15" viewBox="0 0 14 15" fill="none" stroke="#3a3a3a" stroke-width="1.2"><path d="M2 9 L8 2 L11 5 L5 11 Z" stroke="#3a3a3a"/><rect x="1" y="12" width="12" height="2.5" fill="#f0dc28" stroke="none"/></svg><svg class="a" style="left:1001.0px;top:98.3px" width="7" height="5" viewBox="0 0 7 5" fill="none" stroke="#3a3a3a" stroke-width="1.2"><path d="M0.5 0.8 L3.5 3.8 L6.5 0.8" stroke="#555" stroke-width="1.1"/></svg><div class="a t" style="left:1021.0px;top:93.3px;font-size:11.0px;line-height:11.0px;color:#333">A</div><div class="a" style="left:1019.0px;top:105.0px;width:13.0px;height:3.0px;background:#d42a1e"></div><svg class="a" style="left:1036.0px;top:98.3px" width="7" height="5" viewBox="0 0 7 5" fill="none" stroke="#3a3a3a" stroke-width="1.2"><path d="M0.5 0.8 L3.5 3.8 L6.5 0.8" stroke="#555" stroke-width="1.1"/></svg><div class="a" style="left:1052.0px;top:92.0px;width:13.0px;height:15.0px;background:#d9dbe0"></div><div class="a t" style="left:1055.0px;top:94.8px;font-size:11.0px;line-height:11.0px;color:#444">A</div><svg class="a" style="left:1083.0px;top:94.0px" width="14" height="12" viewBox="0 0 14 12" fill="none" stroke="#3a3a3a" stroke-width="1.2"><path d="M1 2 H9 M1 6 H13 M1 10 H7" stroke="#3a3a3a" stroke-width="1.3"/></svg><svg class="a" style="left:1106.0px;top:94.0px" width="14" height="12" viewBox="0 0 14 12" fill="none" stroke="#3a3a3a" stroke-width="1.2"><path d="M3 2 H11 M1 6 H13 M4 10 H10" stroke="#3a3a3a" stroke-width="1.3"/></svg><svg class="a" style="left:1128.0px;top:94.0px" width="14" height="12" viewBox="0 0 14 12" fill="none" stroke="#3a3a3a" stroke-width="1.2"><path d="M5 2 H13 M1 6 H13 M7 10 H13" stroke="#3a3a3a" stroke-width="1.3"/></svg><div class="a" style="left:1148.0px;top:90.5px;width:20.0px;height:19.0px;background:#e8eaee;border-radius:3px"></div><svg class="a" style="left:1151.0px;top:94.0px" width="14" height="12" viewBox="0 0 14 12" fill="none" stroke="#3a3a3a" stroke-width="1.2"><path d="M1 2 H13 M1 6 H13 M1 10 H13" stroke="#3a3a3a" stroke-width="1.3"/></svg><svg class="a" style="left:1173.0px;top:94.0px" width="14" height="12" viewBox="0 0 14 12" fill="none" stroke="#3a3a3a" stroke-width="1.2"><path d="M1 0 V12 M13 0 V12 M3 4 H11 M3 9 H11" stroke="#3a3a3a" stroke-width="1.3"/></svg><svg class="a" style="left:1198.0px;top:93.0px" width="14" height="14" viewBox="0 0 14 14" fill="none" stroke="#3a3a3a" stroke-width="1.2"><path d="M6 2 H13 M6 7 H13 M6 12 H13" stroke="#3a3a3a"/><path d="M2 1 V13 M0.5 2.5 L2 1 L3.5 2.5 M0.5 11.5 L2 13 L3.5 11.5" stroke="#2a5fe8"/></svg><svg class="a" style="left:1215.0px;top:98.3px" width="7" height="5" viewBox="0 0 7 5" fill="none" stroke="#3a3a3a" stroke-width="1.2"><path d="M0.5 0.8 L3.5 3.8 L6.5 0.8" stroke="#555" stroke-width="1.1"/></svg><div class="a" style="left:1232.0px;top:91.0px;width:1.0px;height:18.0px;background:#e6e8ec"></div><svg class="a" style="left:1242.0px;top:92.0px" width="14" height="15" viewBox="0 0 14 15" fill="none" stroke="#3a3a3a" stroke-width="1.2"><path d="M3 6 L7 2 L11 6 L7 10 Z" stroke="#3a3a3a"/><path d="M1 13 H13" stroke="#ccc" stroke-width="2"/></svg><svg class="a" style="left:1258.0px;top:98.3px" width="7" height="5" viewBox="0 0 7 5" fill="none" stroke="#3a3a3a" stroke-width="1.2"><path d="M0.5 0.8 L3.5 3.8 L6.5 0.8" stroke="#555" stroke-width="1.1"/></svg><svg class="a" style="left:1274.0px;top:93.0px" width="14" height="14" viewBox="0 0 14 14" fill="none" stroke="#3a3a3a" stroke-width="1.2"><rect x="0.6" y="0.6" width="12.8" height="12.8" stroke="#3a3a3a"/><path d="M7 1 V13 M1 7 H13" stroke="#aaa"/></svg><svg class="a" style="left:1291.0px;top:98.3px" width="7" height="5" viewBox="0 0 7 5" fill="none" stroke="#3a3a3a" stroke-width="1.2"><path d="M0.5 0.8 L3.5 3.8 L6.5 0.8" stroke="#555" stroke-width="1.1"/></svg><div class="a" style="left:1316.0px;top:66.0px;width:22.0px;height:48.0px;background:#eef0f3;border-radius:5px"></div><svg class="a" style="left:1327.0px;top:83.0px" width="6" height="12" viewBox="0 0 6 12" fill="none" stroke="#3a3a3a" stroke-width="1.2"><path d="M0.5 0.5 L5.5 6 L0.5 11.5" stroke="#555"/></svg><div class="a" style="left:691.0px;top:123.7px;width:611.0px;height:10.5px;background:#cfd2da"></div><div class="a" style="left:767.0px;top:123.7px;width:488.0px;height:10.5px;background:#fbfbfd"></div><div class="a t" style="left:774.0px;top:125.5px;font-size:7.8px;line-height:7.8px;color:#4a4a4a;width:10px;text-align:center">1</div><div class="a" style="left:785.2px;top:128.5px;width:0.6px;height:1.5px;background:#ccc"></div><div class="a t" style="left:786.3px;top:125.5px;font-size:7.8px;line-height:7.8px;color:#4a4a4a;width:10px;text-align:center">2</div><div class="a" style="left:797.5px;top:128.5px;width:0.6px;height:1.5px;background:#ccc"></div><div class="a t" style="left:798.7px;top:125.5px;font-size:7.8px;line-height:7.8px;color:#4a4a4a;width:10px;text-align:center">3</div><div class="a" style="left:809.8px;top:128.5px;width:0.6px;height:1.5px;background:#ccc"></div><div class="a t" style="left:811.0px;top:125.5px;font-size:7.8px;line-height:7.8px;color:#4a4a4a;width:10px;text-align:center">4</div><div class="a" style="left:822.2px;top:128.5px;width:0.6px;height:1.5px;background:#ccc"></div><div class="a t" style="left:823.4px;top:125.5px;font-size:7.8px;line-height:7.8px;color:#4a4a4a;width:10px;text-align:center">5</div><div class="a" style="left:834.5px;top:128.5px;width:0.6px;height:1.5px;background:#ccc"></div><div class="a t" style="left:835.7px;top:125.5px;font-size:7.8px;line-height:7.8px;color:#4a4a4a;width:10px;text-align:center">6</div><div class="a" style="left:846.9px;top:128.5px;width:0.6px;height:1.5px;background:#ccc"></div><div class="a t" style="left:848.0px;top:125.5px;font-size:7.8px;line-height:7.8px;color:#4a4a4a;width:10px;text-align:center">7</div><div class="a" style="left:859.2px;top:128.5px;width:0.6px;height:1.5px;background:#ccc"></div><div class="a t" style="left:860.4px;top:125.5px;font-size:7.8px;line-height:7.8px;color:#4a4a4a;width:10px;text-align:center">8</div><div class="a" style="left:871.5px;top:128.5px;width:0.6px;height:1.5px;background:#ccc"></div><div class="a t" style="left:872.7px;top:125.5px;font-size:7.8px;line-height:7.8px;color:#4a4a4a;width:10px;text-align:center">9</div><div class="a" style="left:883.9px;top:128.5px;width:0.6px;height:1.5px;background:#ccc"></div><div class="a t" style="left:885.1px;top:125.5px;font-size:7.8px;line-height:7.8px;color:#4a4a4a;width:10px;text-align:center">10</div><div class="a" style="left:896.2px;top:128.5px;width:0.6px;height:1.5px;background:#ccc"></div><div class="a t" style="left:897.4px;top:125.5px;font-size:7.8px;line-height:7.8px;color:#4a4a4a;width:10px;text-align:center">11</div><div class="a" style="left:908.6px;top:128.5px;width:0.6px;height:1.5px;background:#ccc"></div><div class="a t" style="left:909.7px;top:125.5px;font-size:7.8px;line-height:7.8px;color:#4a4a4a;width:10px;text-align:center">12</div><div class="a" style="left:920.9px;top:128.5px;width:0.6px;height:1.5px;background:#ccc"></div><div class="a t" style="left:922.1px;top:125.5px;font-size:7.8px;line-height:7.8px;color:#4a4a4a;width:10px;text-align:center">13</div><div class="a" style="left:933.2px;top:128.5px;width:0.6px;height:1.5px;background:#ccc"></div><div class="a t" style="left:934.4px;top:125.5px;font-size:7.8px;line-height:7.8px;color:#4a4a4a;width:10px;text-align:center">14</div><div class="a" style="left:945.6px;top:128.5px;width:0.6px;height:1.5px;background:#ccc"></div><div class="a t" style="left:946.8px;top:125.5px;font-size:7.8px;line-height:7.8px;color:#4a4a4a;width:10px;text-align:center">15</div><div class="a" style="left:957.9px;top:128.5px;width:0.6px;height:1.5px;background:#ccc"></div><div class="a t" style="left:959.1px;top:125.5px;font-size:7.8px;line-height:7.8px;color:#4a4a4a;width:10px;text-align:center">16</div><div class="a" style="left:970.3px;top:128.5px;width:0.6px;height:1.5px;background:#ccc"></div><div class="a t" style="left:971.4px;top:125.5px;font-size:7.8px;line-height:7.8px;color:#4a4a4a;width:10px;text-align:center">17</div><div class="a" style="left:982.6px;top:128.5px;width:0.6px;height:1.5px;background:#ccc"></div><div class="a t" style="left:983.8px;top:125.5px;font-size:7.8px;line-height:7.8px;color:#4a4a4a;width:10px;text-align:center">18</div><div class="a" style="left:995.0px;top:128.5px;width:0.6px;height:1.5px;background:#ccc"></div><div class="a t" style="left:996.1px;top:125.5px;font-size:7.8px;line-height:7.8px;color:#4a4a4a;width:10px;text-align:center">19</div><div class="a" style="left:1007.3px;top:128.5px;width:0.6px;height:1.5px;background:#ccc"></div><div class="a t" style="left:1008.5px;top:125.5px;font-size:7.8px;line-height:7.8px;color:#4a4a4a;width:10px;text-align:center">20</div><div class="a" style="left:1019.6px;top:128.5px;width:0.6px;height:1.5px;background:#ccc"></div><div class="a t" style="left:1020.8px;top:125.5px;font-size:7.8px;line-height:7.8px;color:#4a4a4a;width:10px;text-align:center">21</div><div class="a" style="left:1032.0px;top:128.5px;width:0.6px;height:1.5px;background:#ccc"></div><div class="a t" style="left:1033.1px;top:125.5px;font-size:7.8px;line-height:7.8px;color:#4a4a4a;width:10px;text-align:center">22</div><div class="a" style="left:1044.3px;top:128.5px;width:0.6px;height:1.5px;background:#ccc"></div><div class="a t" style="left:1045.5px;top:125.5px;font-size:7.8px;line-height:7.8px;color:#4a4a4a;width:10px;text-align:center">23</div><div class="a" style="left:1056.7px;top:128.5px;width:0.6px;height:1.5px;background:#ccc"></div><div class="a t" style="left:1057.8px;top:125.5px;font-size:7.8px;line-height:7.8px;color:#4a4a4a;width:10px;text-align:center">24</div><div class="a" style="left:1069.0px;top:128.5px;width:0.6px;height:1.5px;background:#ccc"></div><div class="a t" style="left:1070.2px;top:125.5px;font-size:7.8px;line-height:7.8px;color:#4a4a4a;width:10px;text-align:center">25</div><div class="a" style="left:1081.3px;top:128.5px;width:0.6px;height:1.5px;background:#ccc"></div><div class="a t" style="left:1082.5px;top:125.5px;font-size:7.8px;line-height:7.8px;color:#4a4a4a;width:10px;text-align:center">26</div><div class="a" style="left:1093.7px;top:128.5px;width:0.6px;height:1.5px;background:#ccc"></div><div class="a t" style="left:1094.8px;top:125.5px;font-size:7.8px;line-height:7.8px;color:#4a4a4a;width:10px;text-align:center">27</div><div class="a" style="left:1106.0px;top:128.5px;width:0.6px;height:1.5px;background:#ccc"></div><div class="a t" style="left:1107.2px;top:125.5px;font-size:7.8px;line-height:7.8px;color:#4a4a4a;width:10px;text-align:center">28</div><div class="a" style="left:1118.4px;top:128.5px;width:0.6px;height:1.5px;background:#ccc"></div><div class="a t" style="left:1119.5px;top:125.5px;font-size:7.8px;line-height:7.8px;color:#4a4a4a;width:10px;text-align:center">29</div><div class="a" style="left:1130.7px;top:128.5px;width:0.6px;height:1.5px;background:#ccc"></div><div class="a t" style="left:1131.9px;top:125.5px;font-size:7.8px;line-height:7.8px;color:#4a4a4a;width:10px;text-align:center">30</div><div class="a" style="left:1143.0px;top:128.5px;width:0.6px;height:1.5px;background:#ccc"></div><div class="a t" style="left:1144.2px;top:125.5px;font-size:7.8px;line-height:7.8px;color:#4a4a4a;width:10px;text-align:center">31</div><div class="a" style="left:1155.4px;top:128.5px;width:0.6px;height:1.5px;background:#ccc"></div><div class="a t" style="left:1156.5px;top:125.5px;font-size:7.8px;line-height:7.8px;color:#4a4a4a;width:10px;text-align:center">32</div><div class="a" style="left:1167.7px;top:128.5px;width:0.6px;height:1.5px;background:#ccc"></div><div class="a t" style="left:1168.9px;top:125.5px;font-size:7.8px;line-height:7.8px;color:#4a4a4a;width:10px;text-align:center">33</div><div class="a" style="left:1180.1px;top:128.5px;width:0.6px;height:1.5px;background:#ccc"></div><div class="a t" style="left:1181.2px;top:125.5px;font-size:7.8px;line-height:7.8px;color:#4a4a4a;width:10px;text-align:center">34</div><div class="a" style="left:1192.4px;top:128.5px;width:0.6px;height:1.5px;background:#ccc"></div><div class="a t" style="left:1193.6px;top:125.5px;font-size:7.8px;line-height:7.8px;color:#4a4a4a;width:10px;text-align:center">35</div><div class="a" style="left:1204.7px;top:128.5px;width:0.6px;height:1.5px;background:#ccc"></div><div class="a t" style="left:1205.9px;top:125.5px;font-size:7.8px;line-height:7.8px;color:#4a4a4a;width:10px;text-align:center">36</div><div class="a" style="left:1217.1px;top:128.5px;width:0.6px;height:1.5px;background:#ccc"></div><div class="a t" style="left:1218.2px;top:125.5px;font-size:7.8px;line-height:7.8px;color:#4a4a4a;width:10px;text-align:center">37</div><div class="a" style="left:1229.4px;top:128.5px;width:0.6px;height:1.5px;background:#ccc"></div><div class="a t" style="left:1230.6px;top:125.5px;font-size:7.8px;line-height:7.8px;color:#4a4a4a;width:10px;text-align:center">38</div><div class="a" style="left:1241.8px;top:128.5px;width:0.6px;height:1.5px;background:#ccc"></div><div class="a t" style="left:1242.9px;top:125.5px;font-size:7.8px;line-height:7.8px;color:#4a4a4a;width:10px;text-align:center">39</div><div class="a" style="left:1254.1px;top:128.5px;width:0.6px;height:1.5px;background:#ccc"></div><div class="a t" style="left:1255.3px;top:125.5px;font-size:7.8px;line-height:7.8px;color:#4a4a4a;width:10px;text-align:center">40</div><div class="a" style="left:1266.4px;top:128.5px;width:0.6px;height:1.5px;background:#ccc"></div><div class="a t" style="left:1267.6px;top:125.5px;font-size:7.8px;line-height:7.8px;color:#4a4a4a;width:10px;text-align:center">41</div><div class="a" style="left:1278.8px;top:128.5px;width:0.6px;height:1.5px;background:#ccc"></div><div class="a t" style="left:1279.9px;top:125.5px;font-size:7.8px;line-height:7.8px;color:#4a4a4a;width:10px;text-align:center">42</div><div class="a t" style="left:749.0px;top:125.5px;font-size:7.8px;line-height:7.8px;color:#4a4a4a;width:10px;text-align:center">1</div><div class="a" style="left:760.1px;top:128.5px;width:0.6px;height:1.5px;background:#bbb"></div><div class="a t" style="left:736.7px;top:125.5px;font-size:7.8px;line-height:7.8px;color:#4a4a4a;width:10px;text-align:center">2</div><div class="a" style="left:747.9px;top:128.5px;width:0.6px;height:1.5px;background:#bbb"></div><div class="a t" style="left:724.4px;top:125.5px;font-size:7.8px;line-height:7.8px;color:#4a4a4a;width:10px;text-align:center">3</div><div class="a" style="left:735.5px;top:128.5px;width:0.6px;height:1.5px;background:#bbb"></div><div class="a t" style="left:712.1px;top:125.5px;font-size:7.8px;line-height:7.8px;color:#4a4a4a;width:10px;text-align:center">4</div><div class="a" style="left:723.2px;top:128.5px;width:0.6px;height:1.5px;background:#bbb"></div><div class="a t" style="left:699.8px;top:125.5px;font-size:7.8px;line-height:7.8px;color:#4a4a4a;width:10px;text-align:center">5</div><div class="a" style="left:710.9px;top:128.5px;width:0.6px;height:1.5px;background:#bbb"></div><svg class="a" style="left:689.0px;top:125.0px" width="7" height="7" viewBox="0 0 7 7" fill="none" stroke="#3a3a3a" stroke-width="1.2"><path d="M0.5 0.5 V6 H6" stroke="#444" stroke-width="1.2"/></svg><div class="a t" style="left:1295.0px;top:125.3px;font-size:7.8px;line-height:7.8px;color:#555">4</div><svg class="a" style="left:1301.0px;top:124.0px" width="8" height="10" viewBox="0 0 8 10" fill="none" stroke="#3a3a3a" stroke-width="1.2"><path d="M1 1 H7 L4 4 Z M4 4 V7 M1 9 H7" stroke="#555" stroke-width="1"/></svg><svg class="a" style="left:762.0px;top:120.0px" width="10" height="7" viewBox="0 0 10 7" fill="none" stroke="#3a3a3a" stroke-width="1.2"><path d="M1 0.6 H9 L5 6 Z" fill="#fff" stroke="#555" stroke-width="0.9"/></svg><svg class="a" style="left:1251.0px;top:131.0px" width="9" height="9" viewBox="0 0 9 9" fill="none" stroke="#3a3a3a" stroke-width="1.2"><path d="M4.5 0.6 L8 4 V8 H1 V4 Z" fill="#fff" stroke="#555" stroke-width="0.9"/></svg><div class="a" style="left:687.0px;top:134.2px;width:670.0px;height:10.0px;background:#e3e6ee"></div><div class="a" style="left:6.0px;top:144.0px;width:675.0px;height:640.0px;background:#e3e6ee"></div><div class="a" style="left:9.3px;top:144.0px;width:10.7px;height:328.0px;background:#fbfbfd;border-radius:0 0 4px 4px;box-shadow:0 1px 1px #c8cad0"></div><div class="a t" style="left:11.0px;top:160.5px;font-size:7.0px;line-height:7.0px;"></div><div class="a t" style="left:11.0px;top:195.1px;font-size:7.0px;line-height:7.0px;"></div><div class="a t" style="left:11.0px;top:229.8px;font-size:7.0px;line-height:7.0px;"></div><div class="a t" style="left:11.0px;top:264.5px;font-size:7.0px;line-height:7.0px;"></div><div class="a t" style="left:11.0px;top:299.1px;font-size:7.0px;line-height:7.0px;"></div><div class="a t" style="left:11.0px;top:333.8px;font-size:7.0px;line-height:7.0px;"></div><div class="a t" style="left:11.0px;top:368.4px;font-size:7.0px;line-height:7.0px;"></div><div class="a t" style="left:11.0px;top:403.0px;font-size:7.0px;line-height:7.0px;"></div><div class="a t" style="left:11.0px;top:437.7px;font-size:7.0px;line-height:7.0px;"></div><div class="a t" style="left:11.0px;top:472.4px;font-size:7.0px;line-height:7.0px;"></div><div class="a t" style="left:11.0px;top:507.0px;font-size:7.0px;line-height:7.0px;"></div><div class="a t" style="left:11.0px;top:541.7px;font-size:7.0px;line-height:7.0px;"></div><div class="a t" style="left:11.0px;top:576.3px;font-size:7.0px;line-height:7.0px;"></div><div class="a t" style="left:11.0px;top:611.0px;font-size:7.0px;line-height:7.0px;"></div><div class="a t" style="left:11.0px;top:645.6px;font-size:7.0px;line-height:7.0px;"></div><div class="a t" style="left:11.0px;top:680.2px;font-size:7.0px;line-height:7.0px;"></div><div class="a" style="left:24.3px;top:144.0px;width:641.7px;height:331.4px;background:#fff"></div><div class="a" style="left:24.3px;top:475.4px;width:641.7px;height:308.0px;background:#fff"></div><div class="a" style="left:24.3px;top:475.4px;width:641.7px;height:1.1px;background:#d4d6da"></div><div class="a" style="left:51.0px;top:469.5px;width:22.0px;height:0.8px;background:#d8d8da"></div><div class="a" style="left:51.0px;top:480.0px;width:22.0px;height:0.8px;background:#d8d8da"></div><div class="a" style="left:73.0px;top:469.5px;width:0.8px;height:11.0px;background:#d8d8da"></div><div class="a" style="left:606.0px;top:469.5px;width:22.0px;height:0.8px;background:#d8d8da"></div><div class="a" style="left:606.0px;top:480.0px;width:22.0px;height:0.8px;background:#d8d8da"></div><div class="a" style="left:606.0px;top:469.5px;width:0.8px;height:11.0px;background:#d8d8da"></div><div class="a" style="left:669.0px;top:401.0px;width:4.0px;height:36.0px;background:#c8cad0;border-radius:2px"></div><div class="a t" style="left:669.0px;top:134.0px;font-size:8.0px;line-height:8.0px;color:#666">▴</div><div class="a" style="left:687.0px;top:144.0px;width:670.0px;height:640.0px;background:#e3e6ee"></div><div class="a" style="left:685.7px;top:144.0px;width:13.1px;height:200.0px;background:#e3e6ee"></div><div class="a" style="left:686.0px;top:350.0px;width:12.5px;height:433.0px;background:#fbfbfd;border-radius:4px 4px 0 0"></div><div class="a" style="left:701.7px;top:144.0px;width:596.3px;height:202.0px;background:#fff"></div><div class="a" style="left:701.7px;top:347.5px;width:596.3px;height:436.0px;background:#fff"></div><div class="a" style="left:701.7px;top:346.0px;width:596.3px;height:1.1px;background:#cfd1d6"></div><div class="a" style="left:747.0px;top:341.0px;width:22.0px;height:1.0px;background:#d8d8d8"></div><div class="a" style="left:768.0px;top:341.0px;width:1.0px;height:9.0px;background:#d8d8d8"></div><div class="a" style="left:1255.0px;top:341.0px;width:22.0px;height:1.0px;background:#d8d8d8"></div><div class="a" style="left:1255.0px;top:341.0px;width:1.0px;height:9.0px;background:#d8d8d8"></div><div class="a" style="left:1302.0px;top:274.0px;width:5.0px;height:33.0px;background:#c8cad0;border-radius:2px"></div><div class="a" style="left:1311.0px;top:144.0px;width:46.0px;height:640.0px;background:#e3e6ee"></div><div class="a" style="left:1311.0px;top:144.0px;width:1.0px;height:640.0px;background:#d6d9e0"></div><div class="a" style="left:1328.0px;top:137.5px;width:12.0px;height:1.3px;background:#777"></div><svg class="a" style="left:1327.0px;top:157.0px" width="14" height="14" viewBox="0 0 14 14" fill="none" stroke="#3a3a3a" stroke-width="1.2"><path d="M2 10 L9 2 L12 5 L5 12 H2 Z M1 13.3 H13" stroke="#555"/></svg><svg class="a" style="left:1327.0px;top:189.0px" width="14" height="14" viewBox="0 0 14 14" fill="none" stroke="#3a3a3a" stroke-width="1.2"><path d="M2 2 L12 6 L8 8 L10 12 L8.5 13 L6.5 9 L3.5 12 Z" stroke="#555"/></svg><svg class="a" style="left:1327.0px;top:221.0px" width="14" height="14" viewBox="0 0 14 14" fill="none" stroke="#3a3a3a" stroke-width="1.2"><path d="M1 4 H13 M1 10 H13" stroke="#555"/><circle cx="5" cy="4" r="2" fill="#e3e6ee" stroke="#555"/><circle cx="9" cy="10" r="2" fill="#e3e6ee" stroke="#555"/></svg><svg class="a" style="left:1327.0px;top:253.0px" width="14" height="14" viewBox="0 0 14 14" fill="none" stroke="#3a3a3a" stroke-width="1.2"><rect x="1" y="1" width="12" height="12" rx="3" stroke="#555"/><path d="M5 9 Q7 4 10 8" stroke="#555"/></svg><svg class="a" style="left:1327.0px;top:285.0px" width="14" height="14" viewBox="0 0 14 14" fill="none" stroke="#3a3a3a" stroke-width="1.2"><path d="M2 12 L12 2 M4 4 L10 10 M2 7 L7 2" stroke="#555"/></svg><svg class="a" style="left:1327.0px;top:318.0px" width="14" height="14" viewBox="0 0 14 14" fill="none" stroke="#3a3a3a" stroke-width="1.2"><circle cx="7" cy="7" r="6" stroke="#555"/><path d="M5 5.5 a2 2 0 1 1 2.5 2 V9 M7 10.5 V11.3" stroke="#555"/></svg><svg class="a" style="left:1327.0px;top:354.0px" width="14" height="6" viewBox="0 0 14 6" fill="none" stroke="#3a3a3a" stroke-width="1.2"><circle cx="2.2" cy="3" r="1.6" stroke="#555" stroke-width="1"/><circle cx="7" cy="3" r="1.6" stroke="#555" stroke-width="1"/><circle cx="11.8" cy="3" r="1.6" stroke="#555" stroke-width="1"/></svg><div class="a t" style="left:1302.0px;top:138.0px;font-size:8.0px;line-height:8.0px;color:#666">▴</div><div class="a t" style="left:73.3px;top:127.9px;width:533.0px;font-size:17.6px;line-height:20px;font-weight:bold;color:#161616;white-space:nowrap;text-align:justify;text-align-last:justify;clip-path:inset(16.2px 0 0 0);letter-spacing:-0.283px">这个细节暴露出城市管理的短板，摆放一张座椅看似也要协调各方，</div><div class="a" style="left:73.3px;top:152.3px;width:532.7px;height:38.1px;background:#fff200"></div><div class="a" style="left:73.3px;top:190.4px;width:322.7px;height:38.0px;background:#fff200"></div><div class="a" style="left:163.4px;top:306.0px;width:298.6px;height:38.0px;background:#00e5f5"></div><div class="a t" style="left:73.3px;top:166.3px;width:533.0px;font-size:17.6px;line-height:20px;font-weight:bold;color:#161616;white-space:nowrap;text-align:justify;text-align-last:justify"><span style="color:#e8290f">背后却涉及了市政、绿化、市容等 6 个不同部门，每个部门都有关</span></div><div class="a t" style="left:73.3px;top:204.8px;width:533.0px;font-size:17.6px;line-height:20px;font-weight:bold;color:#161616;white-space:nowrap;text-align:justify;text-align-last:justify"><span style="color:#e8290f">于座椅标准的规范，要优化设置并不容易</span>。怎么“坐”到老百姓心坎</div><div class="a t" style="left:73.3px;top:243.2px;width:533.0px;font-size:17.6px;line-height:20px;font-weight:bold;color:#161616;white-space:nowrap">里？需要做更多的工作。</div><div class="a t" style="left:110.8px;top:281.6px;width:533.0px;font-size:17.6px;line-height:20px;font-weight:bold;color:#161616;white-space:nowrap">资料 3</div><div class="a t" style="left:110.8px;top:320.1px;width:495.2px;font-size:17.6px;line-height:20px;font-weight:bold;color:#161616;white-space:nowrap;text-align:justify;text-align-last:justify">近日，邛崃（qióng lái）市天府现代种业园内的上千亩水稻刚</div><div class="a t" style="left:73.3px;top:358.5px;width:533.0px;font-size:17.6px;line-height:20px;font-weight:bold;color:#161616;white-space:nowrap;text-align:justify;text-align-last:justify;letter-spacing:-0.283px">刚收获，稻田内铺满了金黄的秸秆。金色的原野上，一栋栋展馆大楼</div><div class="a t" style="left:73.3px;top:397.0px;width:533.0px;font-size:17.6px;line-height:20px;font-weight:bold;color:#161616;white-space:nowrap;text-align:justify;text-align-last:justify;letter-spacing:-0.283px">拔地而起，和田野融为一体。作为国家在西南首批布局的唯一国家级</div><div class="a t" style="left:73.3px;top:435.5px;width:533.0px;font-size:17.6px;line-height:20px;font-weight:bold;color:#161616;white-space:nowrap;text-align:justify;text-align-last:justify">种业园区，邛崃市天府现代种业园堪称四川种业“最强大脑”。国庆</div><div class="a t" style="left:73.3px;top:494.4px;width:533.0px;font-size:17.6px;line-height:20px;font-weight:bold;color:#161616;white-space:nowrap;text-align:justify;text-align-last:justify;letter-spacing:-0.283px">假期，园区在建项目施工现场仍一片繁忙，工地上塔吊林立，工程车</div><div class="a t" style="left:73.3px;top:532.9px;width:533.0px;font-size:17.6px;line-height:20px;font-weight:bold;color:#161616;white-space:nowrap">往来不断。</div><div class="a t" style="left:110.8px;top:571.5px;width:495.2px;font-size:17.6px;line-height:20px;font-weight:bold;color:#161616;white-space:nowrap;text-align:justify;text-align-last:justify;letter-spacing:-0.177px">早在 2018 年，邛崃市政府就抢抓先机，积极推进把第一批国家</div><div class="a t" style="left:73.3px;top:610.0px;width:533.0px;font-size:17.6px;line-height:20px;font-weight:bold;color:#161616;white-space:nowrap;text-align:justify;text-align-last:justify;letter-spacing:-0.263px">级种业园落户邛崃，将其列为《四川省“十四五”现代种业发展规划》</div><div class="a t" style="left:73.3px;top:648.6px;width:533.0px;font-size:17.6px;line-height:20px;font-weight:bold;color:#161616;white-space:nowrap;text-align:justify;text-align-last:justify">良种繁育能力提升工程的重要规划之一，为中国西南“种业硅谷”高</div><div class="a t" style="left:73.3px;top:687.1px;width:533.0px;font-size:17.6px;line-height:20px;font-weight:bold;color:#161616;white-space:nowrap">端种业的集群发展，奠定了良好的基础。</div><div class="a t" style="left:110.8px;top:725.7px;width:495.2px;font-size:17.6px;line-height:20px;font-weight:bold;color:#161616;white-space:nowrap;text-align:justify;text-align-last:justify;letter-spacing:-0.664px">从园区成立以来，项目建设就如火如荼，作为全省唯一一个以“大</div><div class="a t" style="left:73.3px;top:764.2px;width:533.0px;font-size:17.6px;line-height:20px;font-weight:bold;color:#161616;white-space:nowrap;text-align:justify;text-align-last:justify;letter-spacing:-0.560px">种业”发展为基础的功能园区，天府现代种业园从种业的研发、生产、</div><div class="a t" style="left:801.5px;top:168.0px;width:100.0px;font-size:16.4px;line-height:20px;font-weight:bold;color:#161616;white-space:nowrap">第三题：</div><div class="a t" style="left:801.5px;top:204.0px;width:454.5px;font-size:16.4px;line-height:20px;font-weight:bold;color:#161616;white-space:nowrap;text-align:justify;text-align-last:justify">四川省拟召开<span style="color:#2233cc">推进现代种业发展</span>现场会，<span style="color:#2233cc">天府现代种业园</span>将在会</div><div class="a t" style="left:768.8px;top:239.0px;width:487.2px;font-size:16.4px;line-height:20px;font-weight:bold;color:#161616;white-space:nowrap;text-align:justify;text-align-last:justify;letter-spacing:-0.264px">上做交流发言。假如你是该种业园的工作人员，请根据“给定资料 3”，</div><div class="a" style="left:867.0px;top:262.0px;width:33.0px;height:35.5px;background:#00e5f5"></div><div class="a t" style="left:768.8px;top:274.0px;width:300.0px;font-size:16.4px;line-height:20px;font-weight:bold;color:#161616;white-space:nowrap">撰写一份发言提纲。（25 分）</div><div class="a t" style="left:768.8px;top:309.0px;width:487.2px;font-size:16.4px;line-height:20px;font-weight:bold;color:#161616;white-space:nowrap;text-align:justify;text-align-last:justify">要求：内容全面，要点突出，条理清晰，语言简洁；不超过 500 字。</div><div class="a" style="left:6.0px;top:783.0px;width:675.0px;height:15.0px;background:#e3e6ee"></div><div class="a" style="left:90.0px;top:788.0px;width:498.0px;height:5.0px;background:#c6c8ce;border-radius:3px"></div><div class="a t" style="left:13.0px;top:787.0px;font-size:8.0px;line-height:8.0px;color:#777">◂</div><div class="a t" style="left:657.0px;top:787.0px;font-size:8.0px;line-height:8.0px;color:#777">▸</div><div class="a" style="left:687.0px;top:783.0px;width:624.0px;height:15.0px;background:#e3e6ee"></div><div class="a" style="left:747.0px;top:788.0px;width:468.0px;height:5.0px;background:#c6c8ce;border-radius:3px"></div><div class="a t" style="left:690.0px;top:787.0px;font-size:8.0px;line-height:8.0px;color:#777">◂</div><div class="a t" style="left:1285.0px;top:787.0px;font-size:8.0px;line-height:8.0px;color:#777">▸</div><div class="a" style="left:6.0px;top:798.0px;width:675.0px;height:19.0px;background:#e8eaf0"></div><div class="a" style="left:687.0px;top:798.0px;width:670.0px;height:19.0px;background:#e8eaf0"></div><div class="a t" style="left:18.0px;top:802.5px;font-size:10.0px;line-height:10.0px;color:#555">页面: 7/15</div><div class="a t" style="left:84.0px;top:802.5px;font-size:10.0px;line-height:10.0px;color:#555">字数: 8277</div><div class="a t" style="left:151.0px;top:802.5px;font-size:10.0px;line-height:10.0px;color:#555">拼写检查: 打开 ▾</div><div class="a t" style="left:696.0px;top:802.5px;font-size:10.0px;line-height:10.0px;color:#555">页面: 4/13</div><div class="a t" style="left:762.0px;top:802.5px;font-size:10.0px;line-height:10.0px;color:#555">字数: 2147</div><svg class="a" style="left:305.0px;top:802.0px" width="14" height="10" viewBox="0 0 14 10" fill="none" stroke="#3a3a3a" stroke-width="1.2"><path d="M1 5 Q7 -1 13 5 Q7 11 1 5 Z" stroke="#555"/><circle cx="7" cy="5" r="1.8" stroke="#555"/></svg><div class="a" style="left:338.0px;top:800.0px;width:14.0px;height:15.0px;background:#d9dce3;border-radius:2px"></div><svg class="a" style="left:340.0px;top:802.0px" width="10" height="11" viewBox="0 0 10 11" fill="none" stroke="#3a3a3a" stroke-width="1.2"><rect x="0.6" y="0.6" width="8.8" height="9.8" stroke="#555"/><path d="M2.5 3.5 H7 M2.5 6 H7" stroke="#555"/></svg><svg class="a" style="left:364.0px;top:802.0px" width="12" height="11" viewBox="0 0 12 11" fill="none" stroke="#3a3a3a" stroke-width="1.2"><path d="M4 1 H11 M4 5.5 H11 M4 10 H11 M1 1 h1 M1 5.5 h1 M1 10 h1" stroke="#555"/></svg><svg class="a" style="left:391.0px;top:801.5px" width="10" height="12" viewBox="0 0 10 12" fill="none" stroke="#3a3a3a" stroke-width="1.2"><path d="M1 1 L9 6 L1 11 Z" stroke="#555"/></svg><svg class="a" style="left:414.0px;top:801.0px" width="13" height="13" viewBox="0 0 13 13" fill="none" stroke="#3a3a3a" stroke-width="1.2"><circle cx="6.5" cy="6.5" r="5.5" stroke="#555"/><path d="M1 6.5 H12 M6.5 1 Q3 6.5 6.5 12 Q10 6.5 6.5 1" stroke="#555"/></svg><svg class="a" style="left:440.0px;top:801.0px" width="13" height="13" viewBox="0 0 13 13" fill="none" stroke="#3a3a3a" stroke-width="1.2"><path d="M2 11 L3 8 L9 2 L11 4 L5 10 Z" stroke="#555"/></svg><svg class="a" style="left:474.0px;top:801.0px" width="13" height="13" viewBox="0 0 13 13" fill="none" stroke="#3a3a3a" stroke-width="1.2"><path d="M1 4 V1 H4 M9 1 H12 V4 M12 9 V12 H9 M4 12 H1 V9" stroke="#555"/><rect x="4" y="4" width="5" height="5" stroke="#555"/></svg><div class="a t" style="left:502.0px;top:802.5px;font-size:10.0px;line-height:10.0px;color:#555">120%</div><svg class="a" style="left:537.0px;top:806.0px" width="7" height="5" viewBox="0 0 7 5" fill="none" stroke="#3a3a3a" stroke-width="1.2"><path d="M0.5 0.8 L3.5 3.8 L6.5 0.8" stroke="#555" stroke-width="1.1"/></svg><div class="a" style="left:557.0px;top:807.0px;width:10.0px;height:1.5px;background:#444"></div><div class="a" style="left:579.0px;top:807.0px;width:43.0px;height:1.5px;background:#2a5fe8"></div><div class="a" style="left:622.0px;top:807.0px;width:48.0px;height:1.0px;background:#bbb"></div><div class="a" style="left:619.0px;top:804.0px;width:7.0px;height:7.0px;background:#fff;border:1.5px solid #888;border-radius:50%"></div><svg class="a" style="left:673.0px;top:802.0px" width="11" height="11" viewBox="0 0 11 11" fill="none" stroke="#3a3a3a" stroke-width="1.2"><path d="M5.5 0.5 V10.5 M0.5 5.5 H10.5" stroke="#333" stroke-width="1.4"/></svg><svg class="a" style="left:938.0px;top:802.0px" width="14" height="10" viewBox="0 0 14 10" fill="none" stroke="#3a3a3a" stroke-width="1.2"><path d="M1 5 Q7 -1 13 5 Q7 11 1 5 Z" stroke="#555"/><circle cx="7" cy="5" r="1.8" stroke="#555"/></svg><div class="a" style="left:971.0px;top:800.0px;width:14.0px;height:15.0px;background:#d9dce3;border-radius:2px"></div><svg class="a" style="left:973.0px;top:802.0px" width="10" height="11" viewBox="0 0 10 11" fill="none" stroke="#3a3a3a" stroke-width="1.2"><rect x="0.6" y="0.6" width="8.8" height="9.8" stroke="#555"/><path d="M2.5 3.5 H7 M2.5 6 H7" stroke="#555"/></svg><svg class="a" style="left:997.0px;top:802.0px" width="12" height="11" viewBox="0 0 12 11" fill="none" stroke="#3a3a3a" stroke-width="1.2"><path d="M4 1 H11 M4 5.5 H11 M4 10 H11 M1 1 h1 M1 5.5 h1 M1 10 h1" stroke="#555"/></svg><svg class="a" style="left:1024.0px;top:801.5px" width="10" height="12" viewBox="0 0 10 12" fill="none" stroke="#3a3a3a" stroke-width="1.2"><path d="M1 1 L9 6 L1 11 Z" stroke="#555"/></svg><svg class="a" style="left:1047.0px;top:801.0px" width="13" height="13" viewBox="0 0 13 13" fill="none" stroke="#3a3a3a" stroke-width="1.2"><circle cx="6.5" cy="6.5" r="5.5" stroke="#555"/><path d="M1 6.5 H12 M6.5 1 Q3 6.5 6.5 12 Q10 6.5 6.5 1" stroke="#555"/></svg><svg class="a" style="left:1073.0px;top:801.0px" width="13" height="13" viewBox="0 0 13 13" fill="none" stroke="#3a3a3a" stroke-width="1.2"><path d="M2 11 L3 8 L9 2 L11 4 L5 10 Z" stroke="#555"/></svg><svg class="a" style="left:1107.0px;top:801.0px" width="13" height="13" viewBox="0 0 13 13" fill="none" stroke="#3a3a3a" stroke-width="1.2"><path d="M1 4 V1 H4 M9 1 H12 V4 M12 9 V12 H9 M4 12 H1 V9" stroke="#555"/><rect x="4" y="4" width="5" height="5" stroke="#555"/></svg><div class="a t" style="left:1136.0px;top:802.5px;font-size:10.0px;line-height:10.0px;color:#555">110%</div><svg class="a" style="left:1171.0px;top:806.0px" width="7" height="5" viewBox="0 0 7 5" fill="none" stroke="#3a3a3a" stroke-width="1.2"><path d="M0.5 0.8 L3.5 3.8 L6.5 0.8" stroke="#555" stroke-width="1.1"/></svg><div class="a" style="left:1191.0px;top:807.0px;width:10.0px;height:1.5px;background:#444"></div><div class="a" style="left:1211.0px;top:807.0px;width:43.0px;height:1.5px;background:#2a5fe8"></div><div class="a" style="left:1254.0px;top:807.0px;width:42.0px;height:1.0px;background:#bbb"></div><div class="a" style="left:1251.0px;top:804.0px;width:7.0px;height:7.0px;background:#fff;border:1.5px solid #888;border-radius:50%"></div><svg class="a" style="left:1307.0px;top:802.0px" width="11" height="11" viewBox="0 0 11 11" fill="none" stroke="#3a3a3a" stroke-width="1.2"><path d="M5.5 0.5 V10.5 M0.5 5.5 H10.5" stroke="#333" stroke-width="1.4"/></svg><svg class="a" style="left:1332.0px;top:801.0px" width="13" height="13" viewBox="0 0 13 13" fill="none" stroke="#3a3a3a" stroke-width="1.2"><path d="M1 5 V1 H5 M8 1 H12 V5 M12 8 V12 H8 M5 12 H1 V8" stroke="#555"/></svg><div class="a t" style="left:1358.0px;top:808.5px;font-size:9.0px;line-height:9.0px;color:#666">▾</div><div class="a" style="left:0.0px;top:817.0px;width:1368.0px;height:39.0px;background:#dde2ee"></div><div class="a" style="left:16.0px;top:827.0px;width:9.0px;height:9.0px;background:#1f7ae0"></div><div class="a" style="left:26.0px;top:827.0px;width:9.0px;height:9.0px;background:#1f7ae0"></div><div class="a" style="left:16.0px;top:837.0px;width:9.0px;height:9.0px;background:#1f7ae0"></div><div class="a" style="left:26.0px;top:837.0px;width:9.0px;height:9.0px;background:#1f7ae0"></div><div class="a" style="left:48.0px;top:825.0px;width:171.0px;height:24.0px;background:#eef1f7;border-radius:12px;border:1px solid #d3d7e0"></div><svg class="a" style="left:55.0px;top:831.0px" width="12" height="12" viewBox="0 0 12 12" fill="none" stroke="#3a3a3a" stroke-width="1.2"><circle cx="6.5" cy="5" r="4" stroke="#333" stroke-width="1.3"/><path d="M3.5 8 L1 11" stroke="#333" stroke-width="1.3"/></svg><div class="a t" style="left:75.0px;top:831.5px;font-size:11.0px;line-height:11.0px;color:#666">搜索</div><svg class="a" style="left:178.0px;top:827.0px" width="40" height="20" viewBox="0 0 40 20" fill="none" stroke="#3a3a3a" stroke-width="1.2"><path d="M2 19 V10 H6 V19 M8 19 V4 H11 V19 M13 19 V12 H17 V19 M19 19 V8 H22 V19 M25 19 V6 H29 V19 M31 19 V10 H35 V19" stroke="#2a9a8a" stroke-width="2"/><path d="M1 19 H39" stroke="#3aa0e0" stroke-width="2.5"/><circle cx="18" cy="14" r="3" fill="#e8b020" stroke="none"/></svg><div class="a" style="left:231.0px;top:829.0px;width:10.0px;height:9.0px;background:#f2f2f2;border:1px solid #bbb"></div><div class="a" style="left:234.0px;top:833.0px;width:12.0px;height:11.0px;background:#2a2a2a"></div><div class="a" style="left:236.0px;top:850.0px;width:6.0px;height:2.0px;background:#8a8e96;border-radius:1px"></div><svg class="a" style="left:267.0px;top:827.0px" width="19" height="19" viewBox="0 0 19 19" fill="none" stroke="#3a3a3a" stroke-width="1.2"><path d="M15.5 12 H4 a6 6 0 0 0 11 2.5 M4 9.5 H15.5 a6.5 6.5 0 0 0 -11.5 -2.5" stroke="#3cae3a" stroke-width="2.6"/><path d="M3 4 Q9 -1 17 5" stroke="#f2c200" stroke-width="2"/></svg><div class="a" style="left:273.0px;top:850.0px;width:6.0px;height:2.0px;background:#8a8e96;border-radius:1px"></div><div class="a" style="left:303.0px;top:827.0px;width:19.0px;height:19.0px;background:#111;border-radius:5px"></div><svg class="a" style="left:306.0px;top:831.0px" width="13" height="11" viewBox="0 0 13 11" fill="none" stroke="#3a3a3a" stroke-width="1.2"><path d="M1 1 H12 L1 10 H12 Z" stroke="#fff" stroke-width="1.8" stroke-linejoin="round"/></svg><div class="a" style="left:309.0px;top:850.0px;width:6.0px;height:2.0px;background:#e8432a;border-radius:1px"></div><svg class="a" style="left:338.0px;top:827.0px" width="19" height="19" viewBox="0 0 19 19" fill="none" stroke="#3a3a3a" stroke-width="1.2"><path d="M16.5 9.5 a7.5 7.5 0 1 0 -4 7" stroke="#1a9fb0" stroke-width="3.4"/><path d="M8 9 Q12 5 16 10" stroke="#4ec2e0" stroke-width="2.4"/></svg><div class="a" style="left:344.0px;top:850.0px;width:6.0px;height:2.0px;background:#8a8e96;border-radius:1px"></div><div class="a" style="left:373.0px;top:828.0px;width:8.0px;height:4.0px;background:#e9a900;border-radius:1px 1px 0 0"></div><div class="a" style="left:373.0px;top:831.0px;width:19.0px;height:14.0px;background:#f7c51c;border-radius:1px;border-bottom:4px solid #2a6ad8"></div><div class="a" style="left:379.0px;top:850.0px;width:6.0px;height:2.0px;background:#8a8e96;border-radius:1px"></div><svg class="a" style="left:407.0px;top:828.0px" width="20" height="16" viewBox="0 0 20 16" fill="none" stroke="#3a3a3a" stroke-width="1.2"><path d="M1.5 2.5 L5.5 14 L10 6.5 L14.5 14 L18.5 2.5" stroke="#e8432a" stroke-width="3.4" stroke-linejoin="round"/><path d="M7 3 H13" stroke="#e8432a" stroke-width="2.4"/></svg><div class="a" style="left:414.0px;top:850.0px;width:6.0px;height:2.0px;background:#8a8e96;border-radius:1px"></div><svg class="a" style="left:444.0px;top:828.0px" width="20" height="17" viewBox="0 0 20 17" fill="none" stroke="#3a3a3a" stroke-width="1.2"><rect x="1" y="1" width="15" height="11" rx="1" stroke="#3fae49" stroke-width="1.8"/><circle cx="14.5" cy="12.5" r="4" fill="#b9bcc2" stroke="none"/></svg><div class="a" style="left:450.0px;top:850.0px;width:6.0px;height:2.0px;background:#8a8e96;border-radius:1px"></div><div class="a" style="left:482.0px;top:827.0px;width:16.0px;height:16.0px;background:rgba(240,120,120,.12);border-radius:3px"></div><div class="a" style="left:479.0px;top:829.0px;width:14.0px;height:12.0px;background:#2bb24c;border-radius:50%"></div><div class="a" style="left:487.0px;top:834.0px;width:11.0px;height:9.0px;background:#d8dbe0;border-radius:50%"></div><div class="a" style="left:485.0px;top:850.0px;width:6.0px;height:2.0px;background:#e8432a;border-radius:1px"></div><svg class="a" style="left:515.0px;top:828.0px" width="19" height="17" viewBox="0 0 19 17" fill="none" stroke="#3a3a3a" stroke-width="1.2"><circle cx="6" cy="10.5" r="4" stroke="#3a8ee8" stroke-width="2.4"/><circle cx="13" cy="10.5" r="4" stroke="#3ac0e0" stroke-width="2.4"/><circle cx="9.5" cy="5.5" r="4" stroke="#e84a6a" stroke-width="2.4"/></svg><div class="a" style="left:521.0px;top:850.0px;width:6.0px;height:2.0px;background:#8a8e96;border-radius:1px"></div><div class="a" style="left:550.0px;top:827.0px;width:19.0px;height:19.0px;background:#1e72e8;border-radius:4px"></div><svg class="a" style="left:552.0px;top:832.0px" width="15" height="9" viewBox="0 0 15 9" fill="none" stroke="#3a3a3a" stroke-width="1.2"><path d="M1 8 L5 2 L8 6 L11 2 L14 8" stroke="#fff" stroke-width="2.2" stroke-linejoin="round"/></svg><div class="a" style="left:556.0px;top:850.0px;width:6.0px;height:2.0px;background:#8a8e96;border-radius:1px"></div><svg class="a" style="left:584.0px;top:828.0px" width="20" height="16" viewBox="0 0 20 16" fill="none" stroke="#3a3a3a" stroke-width="1.2"><path d="M1.5 2.5 L5.5 14 L10 6.5 L14.5 14 L18.5 2.5" stroke="#e8432a" stroke-width="3.4" stroke-linejoin="round"/><path d="M7 3 H13" stroke="#e8432a" stroke-width="2.4"/></svg><div class="a" style="left:591.0px;top:850.0px;width:6.0px;height:2.0px;background:#8a8e96;border-radius:1px"></div><div class="a" style="left:621.0px;top:827.0px;width:19.0px;height:19.0px;background:#ea4a4a;border-radius:5px"></div><svg class="a" style="left:624.0px;top:830.0px" width="13" height="13" viewBox="0 0 13 13" fill="none" stroke="#3a3a3a" stroke-width="1.2"><path d="M8 2 a5 5 0 1 0 3 3 M6.5 4 a3 3 0 1 0 2.5 3.5 L8 2.5" stroke="#fff" stroke-width="1.6"/></svg><div class="a" style="left:627.0px;top:850.0px;width:6.0px;height:2.0px;background:#8a8e96;border-radius:1px"></div><div class="a" style="left:586.0px;top:849.5px;width:16.0px;height:2.5px;background:#1f6fe0;border-radius:1px"></div><div class="a" style="left:580.0px;top:821.0px;width:28.0px;height:33.0px;background:rgba(255,255,255,.35);border-radius:4px"></div><svg class="a" style="left:1101.0px;top:832.0px" width="10" height="7" viewBox="0 0 10 7" fill="none" stroke="#3a3a3a" stroke-width="1.2"><path d="M0.5 6 L5 1 L9.5 6" stroke="#333" stroke-width="1.3"/></svg><div class="a" style="left:1119.0px;top:829.0px;width:14.0px;height:14.0px;background:#f0c419;border-radius:50%;border:2px solid #2aa24a"></div><svg class="a" style="left:1143.0px;top:828.0px" width="10" height="16" viewBox="0 0 10 16" fill="none" stroke="#3a3a3a" stroke-width="1.2"><rect x="2.5" y="0.6" width="5" height="9" rx="2.5" fill="#2a6fe0" stroke="none"/><path d="M1 7 a4 4 0 0 0 8 0 M5 11 V15" stroke="#2a6fe0"/></svg><div class="a t" style="left:1167.0px;top:830.5px;font-size:12.0px;line-height:12.0px;color:#444">中</div><svg class="a" style="left:1196.0px;top:828.0px" width="16" height="16" viewBox="0 0 16 16" fill="none" stroke="#3a3a3a" stroke-width="1.2"><path d="M12 3 Q3 1 4 6 Q5 9 11 9 Q14 12 4 14" stroke="#f05a22" stroke-width="3"/></svg><svg class="a" style="left:1226.0px;top:829.0px" width="16" height="13" viewBox="0 0 16 13" fill="none" stroke="#3a3a3a" stroke-width="1.2"><path d="M1 5 Q8 -1 15 5 M3.5 8 Q8 4 12.5 8 M6 10.5 Q8 9 10 10.5" stroke="#333" stroke-width="1.3"/></svg><svg class="a" style="left:1246.0px;top:829.0px" width="14" height="14" viewBox="0 0 14 14" fill="none" stroke="#3a3a3a" stroke-width="1.2"><path d="M1 5 H4 L8 1.5 V12.5 L4 9 H1 Z M10 4.5 Q12 7 10 9.5" stroke="#333" stroke-width="1.2"/></svg><svg class="a" style="left:1265.0px;top:830.0px" width="18" height="12" viewBox="0 0 18 12" fill="none" stroke="#3a3a3a" stroke-width="1.2"><rect x="3" y="1.5" width="12" height="9" rx="1.5" stroke="#333" stroke-width="1.3"/><rect x="5" y="3.5" width="6" height="5" fill="#333" stroke="none"/><path d="M1 2 V9 M16.5 4 V8" stroke="#333" stroke-width="1.5"/></svg><div class="a t" style="left:1309.0px;top:824.8px;font-size:10.5px;line-height:10.5px;color:#222">17:33</div><div class="a t" style="left:1293.0px;top:837.8px;font-size:10.5px;line-height:10.5px;color:#222">2024/3/2</div><div class="a" style="left:1357.0px;top:0.0px;width:11.0px;height:817.0px;background:#ecedf1"></div><div class="a" style="left:1357.0px;top:619.0px;width:11.0px;height:128.0px;background:#c9cacd"></div><div class="a" style="left:1359.7px;top:533.0px;width:5.0px;height:45.0px;background:#f26b3a;border-radius:2px"></div><div class="a" style="left:1275.0px;top:541.0px;width:76.0px;height:28.4px;background:#22b45a;border-radius:3px"></div><div class="a t" style="left:1286.0px;top:549.8px;font-size:10.5px;line-height:10.5px;color:#e8ffee">点我加速！ ✕</div><div class="a" style="left:0.0px;top:0.0px;width:1368.0px;height:1.5px;background:#9a9ca2"></div><div class="a" style="left:0.0px;top:0.0px;width:5.0px;height:817.0px;background:#f4f4f6"></div><div class="a" style="left:0.0px;top:21.0px;width:5.0px;height:14.0px;background:#e8733a"></div><div class="a" style="left:4.7px;top:0.0px;width:1.2px;height:817.0px;background:#c9ccd3"></div><div class="a" style="left:682.0px;top:0.0px;width:1.3px;height:817.0px;background:#b9bcc4"></div><div class="a t" style="left:10.0px;top:149.2px;font-size:7.5px;line-height:7.5px;color:#555;width:10px;text-align:center"><span style="display:inline-block;transform:rotate(90deg)">29</span></div><div class="a t" style="left:10.0px;top:169.8px;font-size:7.5px;line-height:7.5px;color:#555;width:10px;text-align:center"><span style="display:inline-block;transform:rotate(90deg)">30</span></div><div class="a t" style="left:10.0px;top:190.4px;font-size:7.5px;line-height:7.5px;color:#555;width:10px;text-align:center"><span style="display:inline-block;transform:rotate(90deg)">31</span></div><div class="a t" style="left:10.0px;top:210.9px;font-size:7.5px;line-height:7.5px;color:#555;width:10px;text-align:center"><span style="display:inline-block;transform:rotate(90deg)">32</span></div><div class="a t" style="left:10.0px;top:231.5px;font-size:7.5px;line-height:7.5px;color:#555;width:10px;text-align:center"><span style="display:inline-block;transform:rotate(90deg)">33</span></div><div class="a t" style="left:10.0px;top:252.0px;font-size:7.5px;line-height:7.5px;color:#555;width:10px;text-align:center"><span style="display:inline-block;transform:rotate(90deg)">34</span></div><div class="a t" style="left:10.0px;top:272.5px;font-size:7.5px;line-height:7.5px;color:#555;width:10px;text-align:center"><span style="display:inline-block;transform:rotate(90deg)">35</span></div><div class="a t" style="left:10.0px;top:293.1px;font-size:7.5px;line-height:7.5px;color:#555;width:10px;text-align:center"><span style="display:inline-block;transform:rotate(90deg)">36</span></div><div class="a t" style="left:10.0px;top:313.6px;font-size:7.5px;line-height:7.5px;color:#555;width:10px;text-align:center"><span style="display:inline-block;transform:rotate(90deg)">37</span></div><div class="a t" style="left:10.0px;top:334.2px;font-size:7.5px;line-height:7.5px;color:#555;width:10px;text-align:center"><span style="display:inline-block;transform:rotate(90deg)">38</span></div><div class="a t" style="left:10.0px;top:354.8px;font-size:7.5px;line-height:7.5px;color:#555;width:10px;text-align:center"><span style="display:inline-block;transform:rotate(90deg)">39</span></div><div class="a t" style="left:10.0px;top:375.3px;font-size:7.5px;line-height:7.5px;color:#555;width:10px;text-align:center"><span style="display:inline-block;transform:rotate(90deg)">40</span></div><div class="a t" style="left:10.0px;top:395.9px;font-size:7.5px;line-height:7.5px;color:#555;width:10px;text-align:center"><span style="display:inline-block;transform:rotate(90deg)">41</span></div><div class="a t" style="left:10.0px;top:416.4px;font-size:7.5px;line-height:7.5px;color:#555;width:10px;text-align:center"><span style="display:inline-block;transform:rotate(90deg)">42</span></div><div class="a t" style="left:10.0px;top:437.0px;font-size:7.5px;line-height:7.5px;color:#555;width:10px;text-align:center"><span style="display:inline-block;transform:rotate(90deg)">43</span></div><div class="a t" style="left:10.0px;top:457.5px;font-size:7.5px;line-height:7.5px;color:#555;width:10px;text-align:center"><span style="display:inline-block;transform:rotate(90deg)">44</span></div><div class="a t" style="left:687.0px;top:364.8px;font-size:7.5px;line-height:7.5px;color:#555;width:11px;text-align:center"><span style="display:inline-block;transform:rotate(90deg)">1</span></div><div class="a t" style="left:687.0px;top:383.4px;font-size:7.5px;line-height:7.5px;color:#555;width:11px;text-align:center"><span style="display:inline-block;transform:rotate(90deg)">2</span></div><div class="a t" style="left:687.0px;top:402.0px;font-size:7.5px;line-height:7.5px;color:#555;width:11px;text-align:center"><span style="display:inline-block;transform:rotate(90deg)">3</span></div><div class="a t" style="left:687.0px;top:420.5px;font-size:7.5px;line-height:7.5px;color:#555;width:11px;text-align:center"><span style="display:inline-block;transform:rotate(90deg)">4</span></div><div class="a t" style="left:687.0px;top:439.1px;font-size:7.5px;line-height:7.5px;color:#555;width:11px;text-align:center"><span style="display:inline-block;transform:rotate(90deg)">5</span></div><div class="a t" style="left:687.0px;top:457.8px;font-size:7.5px;line-height:7.5px;color:#555;width:11px;text-align:center"><span style="display:inline-block;transform:rotate(90deg)">6</span></div><div class="a t" style="left:687.0px;top:476.4px;font-size:7.5px;line-height:7.5px;color:#555;width:11px;text-align:center"><span style="display:inline-block;transform:rotate(90deg)">7</span></div><div class="a t" style="left:687.0px;top:495.0px;font-size:7.5px;line-height:7.5px;color:#555;width:11px;text-align:center"><span style="display:inline-block;transform:rotate(90deg)">8</span></div><div class="a t" style="left:687.0px;top:513.5px;font-size:7.5px;line-height:7.5px;color:#555;width:11px;text-align:center"><span style="display:inline-block;transform:rotate(90deg)">9</span></div><div class="a t" style="left:687.0px;top:532.1px;font-size:7.5px;line-height:7.5px;color:#555;width:11px;text-align:center"><span style="display:inline-block;transform:rotate(90deg)">10</span></div><div class="a t" style="left:687.0px;top:550.8px;font-size:7.5px;line-height:7.5px;color:#555;width:11px;text-align:center"><span style="display:inline-block;transform:rotate(90deg)">11</span></div><div class="a t" style="left:687.0px;top:569.4px;font-size:7.5px;line-height:7.5px;color:#555;width:11px;text-align:center"><span style="display:inline-block;transform:rotate(90deg)">12</span></div><div class="a t" style="left:687.0px;top:588.0px;font-size:7.5px;line-height:7.5px;color:#555;width:11px;text-align:center"><span style="display:inline-block;transform:rotate(90deg)">13</span></div><div class="a t" style="left:687.0px;top:606.5px;font-size:7.5px;line-height:7.5px;color:#555;width:11px;text-align:center"><span style="display:inline-block;transform:rotate(90deg)">14</span></div><div class="a t" style="left:687.0px;top:625.2px;font-size:7.5px;line-height:7.5px;color:#555;width:11px;text-align:center"><span style="display:inline-block;transform:rotate(90deg)">15</span></div><div class="a t" style="left:687.0px;top:643.8px;font-size:7.5px;line-height:7.5px;color:#555;width:11px;text-align:center"><span style="display:inline-block;transform:rotate(90deg)">16</span></div><div class="a t" style="left:687.0px;top:662.4px;font-size:7.5px;line-height:7.5px;color:#555;width:11px;text-align:center"><span style="display:inline-block;transform:rotate(90deg)">17</span></div><div class="a t" style="left:687.0px;top:681.0px;font-size:7.5px;line-height:7.5px;color:#555;width:11px;text-align:center"><span style="display:inline-block;transform:rotate(90deg)">18</span></div><div class="a t" style="left:687.0px;top:699.5px;font-size:7.5px;line-height:7.5px;color:#555;width:11px;text-align:center"><span style="display:inline-block;transform:rotate(90deg)">19</span></div><div class="a t" style="left:687.0px;top:718.2px;font-size:7.5px;line-height:7.5px;color:#555;width:11px;text-align:center"><span style="display:inline-block;transform:rotate(90deg)">20</span></div><div class="a t" style="left:687.0px;top:736.8px;font-size:7.5px;line-height:7.5px;color:#555;width:11px;text-align:center"><span style="display:inline-block;transform:rotate(90deg)">21</span></div><div class="a t" style="left:687.0px;top:755.3px;font-size:7.5px;line-height:7.5px;color:#555;width:11px;text-align:center"><span style="display:inline-block;transform:rotate(90deg)">22</span></div><div class="a t" style="left:687.0px;top:774.0px;font-size:7.5px;line-height:7.5px;color:#555;width:11px;text-align:center"><span style="display:inline-block;transform:rotate(90deg)">23</span></div><div class="a t" style="left:669.0px;top:734.0px;font-size:8.0px;line-height:8.0px;color:#666">▾</div><div class="a t" style="left:669.0px;top:746.0px;font-size:8.0px;line-height:8.0px;color:#666">⇞</div><div class="a" style="left:669.5px;top:760.0px;width:5.0px;height:5.0px;border:1px solid #666;border-radius:1px"></div><div class="a t" style="left:669.0px;top:768.0px;font-size:8.0px;line-height:8.0px;color:#666">⇟</div><div class="a t" style="left:1302.0px;top:734.0px;font-size:8.0px;line-height:8.0px;color:#666">▾</div><div class="a t" style="left:1302.0px;top:746.0px;font-size:8.0px;line-height:8.0px;color:#666">⇞</div><div class="a" style="left:1302.5px;top:760.0px;width:5.0px;height:5.0px;border:1px solid #666;border-radius:1px"></div><div class="a t" style="left:1302.0px;top:768.0px;font-size:8.0px;line-height:8.0px;color:#666">⇟</div><svg class="a" style="left:68.0px;top:130.0px" width="11" height="14" viewBox="0 0 11 14" fill="none" stroke="#3a3a3a" stroke-width="1.2"><path d="M5.5 0.6 L10 5 V8 H1 V5 Z M1 8 H10 V13 H1 Z" fill="#fff" stroke="#555" stroke-width="0.9"/></svg><svg class="a" style="left:762.0px;top:130.0px" width="11" height="14" viewBox="0 0 11 14" fill="none" stroke="#3a3a3a" stroke-width="1.2"><path d="M5.5 0.6 L10 5 V8 H1 V5 Z M1 8 H10 V13 H1 Z" fill="#fff" stroke="#555" stroke-width="0.9"/></svg><svg class="a" style="left:600.0px;top:131.0px" width="9" height="9" viewBox="0 0 9 9" fill="none" stroke="#3a3a3a" stroke-width="1.2"><path d="M4.5 0.6 L8 4 V8 H1 V4 Z" fill="#fff" stroke="#555" stroke-width="0.9"/></svg><svg class="a" style="left:1251.0px;top:131.0px" width="9" height="9" viewBox="0 0 9 9" fill="none" stroke="#3a3a3a" stroke-width="1.2"><path d="M4.5 0.6 L8 4 V8 H1 V4 Z" fill="#fff" stroke="#555" stroke-width="0.9"/></svg><div class="a" style="left:74.0px;top:801.0px;width:0.8px;height:13.0px;background:#d4d7de"></div><div class="a" style="left:141.0px;top:801.0px;width:0.8px;height:13.0px;background:#d4d7de"></div><div class="a" style="left:328.0px;top:801.0px;width:0.8px;height:13.0px;background:#d4d7de"></div><div class="a" style="left:464.0px;top:801.0px;width:0.8px;height:13.0px;background:#d4d7de"></div><div class="a" style="left:755.0px;top:801.0px;width:0.8px;height:13.0px;background:#d4d7de"></div><div class="a" style="left:821.0px;top:801.0px;width:0.8px;height:13.0px;background:#d4d7de"></div><div class="a" style="left:961.0px;top:801.0px;width:0.8px;height:13.0px;background:#d4d7de"></div><div class="a" style="left:1096.0px;top:801.0px;width:0.8px;height:13.0px;background:#d4d7de"></div><div class="a" style="left:6.0px;top:816.5px;width:675.0px;height:1.0px;background:#cdd0d7"></div><div class="a" style="left:687.0px;top:816.5px;width:670.0px;height:1.0px;background:#cdd0d7"></div><svg class="a" style="left:1058.0px;top:228.0px" width="9" height="16" viewBox="0 0 9 16" fill="none" stroke="#3a3a3a" stroke-width="1.2"><path d="M1 1 H8 M1 15 H8 M4.5 1 V15" stroke="#222" stroke-width="1.1"/></svg><div class="a" style="left:1185.0px;top:21.3px;width:165.0px;height:18.2px;background:#fff;border-radius:2px;box-shadow:0 1px 2px rgba(0,0,0,.1)"></div><div class="a" style="left:1173.0px;top:19.0px;width:20.0px;height:19.0px;background:#f26a2a;border-radius:4px;transform:rotate(-12deg)"></div><div class="a t" style="left:1176.5px;top:21.0px;font-size:15.0px;line-height:15.0px;color:#fff;font-weight:bold;font-style:italic">S</div><div class="a t" style="left:1199.0px;top:24.6px;font-size:12.0px;line-height:12.0px;color:#1a6ad6;font-weight:bold">中</div><div class="a t" style="left:1221.0px;top:23.5px;font-size:11.0px;line-height:11.0px;color:#1a6ad6;font-weight:bold">°,</div><svg class="a" style="left:1240.0px;top:23.0px" width="9" height="15" viewBox="0 0 9 15" fill="none" stroke="#3a3a3a" stroke-width="1.2"><rect x="2" y="0.5" width="5" height="9" rx="2.5" fill="#1a6ad6" stroke="none"/><path d="M0.8 6 a3.7 3.7 0 0 0 7.4 0 M4.5 10 V14" stroke="#1a6ad6" stroke-width="1.2"/></svg><svg class="a" style="left:1258.0px;top:25.5px" width="12" height="10" viewBox="0 0 12 10" fill="none" stroke="#3a3a3a" stroke-width="1.2"><rect x="0.6" y="0.6" width="10.8" height="8.8" rx="1" stroke="#1a6ad6" stroke-width="1.2"/><path d="M2.5 3 h7 M2.5 5 h7 M3.5 7 h5" stroke="#1a6ad6" stroke-width="1"/></svg><svg class="a" style="left:1277.0px;top:25.0px" width="12" height="11" viewBox="0 0 12 11" fill="none" stroke="#3a3a3a" stroke-width="1.2"><path d="M0.5 2.5 L4 0.5 H8 L11.5 2.5 L10.5 5 H9 V10.5 H3 V5 H1.5 Z" fill="#7a5ae0" stroke="none"/></svg><div class="a" style="left:1296.0px;top:26.0px;width:13.0px;height:9.0px;background:#1a6ad6;border-radius:5px"></div><div class="a" style="left:1315.0px;top:24.5px;width:5.0px;height:5.0px;background:#1a6ad6;border-radius:1.5px"></div><div class="a" style="left:1321.5px;top:24.5px;width:5.0px;height:5.0px;background:#1a6ad6;border-radius:1.5px"></div><div class="a" style="left:1315.0px;top:31.0px;width:5.0px;height:5.0px;background:#1a6ad6;border-radius:1.5px"></div><div class="a" style="left:1321.5px;top:31.0px;width:5.0px;height:5.0px;background:#1a6ad6;border-radius:1.5px"></div><svg class="a" style="left:1333.0px;top:23.5px" width="14" height="14" viewBox="0 0 14 14" fill="none" stroke="#3a3a3a" stroke-width="1.2"><circle cx="7" cy="7" r="3.5" stroke="#1a6ad6" stroke-width="2.5"/><path d="M7 0.5 V3 M7 11 V13.5 M0.5 7 H3 M11 7 H13.5 M2.3 2.3 L4 4 M10 10 L11.7 11.7 M11.7 2.3 L10 4 M4 10 L2.3 11.7" stroke="#1a6ad6" stroke-width="2"/></svg></div>

  
  <!-- next chevron -->
  <div class="a" style="left:1460px;top:595px;width:60px;height:160px;background:#0a0a0a;border-radius:26px 0 0 26px"></div>
  <svg class="a" style="left:1480px;top:656px" width="24" height="38"><path d="M5 4 L19 19 L5 34" fill="none" stroke="#fff" stroke-width="3.2"/></svg>
  <!-- watermark -->
  <div class="a" style="left:1412px;top:1135px;width:32px;height:19px;background:#555"></div>
  <div class="a" style="left:1417px;top:1136px;font-size:10.6px;color:#e8e8e8;white-space:nowrap;letter-spacing:0;text-shadow:0 0 1px #000">2024/03/02 17:33:23</div>
  <svg class="a" style="left:1434px;top:1124px" width="24" height="24"><circle cx="11.5" cy="12" r="9.5" fill="none" stroke="#d8d8d8" stroke-width="2"/><path d="M8.5 10 v2 M14.5 10 v2" stroke="#d8d8d8" stroke-width="1.6"/></svg>
  <div class="a" style="left:1458px;top:1125px;font-size:17.5px;color:#d8d8d8;white-space:nowrap;letter-spacing:-0.3px;text-shadow:0 0 1px #000">CCtalk</div>
<!-- controls -->
  <div class="a" style="left:40px;top:1206px;font-size:26px;color:#fff">00:02</div>
  <div class="a" style="left:1417px;top:1206px;font-size:26px;color:#fff">30:19</div>
  <div class="a seg" style="left:134px;width:80px"></div>
  <div class="a seg" style="left:134px;width:57px;background:#5a5a5a;border-radius:3px 0 0 3px"></div>
  <div class="a" style="left:134px;top:1216px;width:3px;height:12px;background:#fff"></div>
  <div class="a seg" style="left:220px;width:173px"></div>
  <div class="a seg" style="left:400px;width:109px"></div>
  <div class="a seg" style="left:515px;width:164px"></div>
  <div class="a seg" style="left:685px;width:489px"></div>
  <div class="a seg" style="left:1180px;width:208px"></div>

  <div class="a" style="left:50px;top:1269px;width:7px;height:34px;background:#fff;border-radius:1px"></div>
  <div class="a" style="left:71px;top:1269px;width:7px;height:34px;background:#fff;border-radius:1px"></div>
  <svg class="a" style="left:130px;top:1262px" width="44" height="48"><path d="M6 6 L30 24 L6 42 Z" fill="#fff" stroke="#fff" stroke-width="2" stroke-linejoin="round"/><rect x="30" y="6" width="7" height="36" rx="1" fill="#fff"/></svg>


  <svg class="a" style="left:1140px;top:1260px" width="56" height="52" viewBox="1140 1260 56 52" fill="none" stroke="#fff" stroke-width="4" stroke-linejoin="round" stroke-linecap="round">
    <path d="M1148 1278 H1156 L1169 1268 V1303.5 L1156 1294 H1148 Z"/>
    <path d="M1177 1280.5 Q1181 1286.5 1177 1292.5" stroke-width="3.6" stroke-linecap="butt"/>
    <path d="M1183.5 1274 Q1192 1286.5 1183.5 1299" stroke-width="3.6" stroke-linecap="butt"/>
  </svg>
  <svg class="a" style="left:1240px;top:1260px" width="48" height="52" viewBox="1240 1260 48 52" fill="none" stroke="#fff" stroke-width="4" stroke-linejoin="round">
    <path d="M1264 1267 L1281 1276 V1295.5 L1264 1304.5 L1247 1295.5 V1276 Z"/>
    <circle cx="1264" cy="1285.8" r="5.8"/>
  </svg>
  <svg class="a" style="left:1336px;top:1262px" width="48" height="48" viewBox="1336 1262 48 48" fill="none" stroke="#fff" stroke-width="4" stroke-linejoin="round">
    <path d="M1358 1301.7 H1345.5 a1.5 1.5 0 0 1 -1.5 -1.5 V1271.5 a1.5 1.5 0 0 1 1.5 -1.5 H1374 a1.5 1.5 0 0 1 1.5 1.5 V1285"/>
    <rect x="1364" y="1290" width="11.5" height="11.7" rx="2"/>
    <path d="M1348 1274 L1357 1283" stroke-width="3.6"/>
    <path d="M1352 1285.5 L1360 1286 L1359.5 1278 Z" fill="#fff" stroke-width="1"/>
  </svg>
  <svg class="a" style="left:1434px;top:1264px" width="44" height="44" viewBox="1434 1264 44 44" fill="none" stroke="#fff" stroke-width="4">
    <path d="M1441.6 1286 V1272 H1455.6"/>
    <path d="M1456 1300 H1469.8 V1286"/>
  </svg>
  <div class="a ctl" style="left:597px">AI总结</div>
  <div class="a ctl" style="left:728px">字幕</div>
  <div class="a ctl" style="left:832px">选集</div>
  <div class="a ctl" style="left:936px">倍速</div>
  <div class="a ctl" style="left:1040px;color:#ecdca0">超清</div>

  <!-- title bar icons -->
  <svg class="a" style="left:2008px;top:28px" width="52" height="48" viewBox="0 0 52 48"><path d="M12 11 h5 l2.5 -4 a2 2 0 0 1 1.7 -1 h9.6 a2 2 0 0 1 1.7 1 l2.5 4 h5 a5 5 0 0 1 5 5 v21 a5 5 0 0 1 -5 5 h-28 a5 5 0 0 1 -5 -5 v-21 a5 5 0 0 1 5 -5z" fill="none" stroke="#fff" stroke-width="4" stroke-linejoin="round"/><circle cx="26" cy="26" r="5" fill="none" stroke="#fff" stroke-width="4"/></svg>
  <svg class="a" style="left:2100px;top:28px" width="52" height="48" viewBox="0 0 52 48"><path d="M23 42 H6 V7 H34 V14" fill="none" stroke="#fff" stroke-width="4"/><path d="M14 19 H22" stroke="#fff" stroke-width="4"/><path d="M25 36 L40 21 a3 3 0 0 1 4.5 0 l0.8 0.8 a3 3 0 0 1 0 4.5 L30.5 41.5 H25 Z" fill="none" stroke="#fff" stroke-width="4" stroke-linejoin="round"/></svg>
  <div class="a" style="left:2194px;top:48px;width:7px;height:7px;border-radius:50%;background:#fff"></div>
  <div class="a" style="left:2208px;top:48px;width:7px;height:7px;border-radius:50%;background:#fff"></div>
  <div class="a" style="left:2222px;top:48px;width:7px;height:7px;border-radius:50%;background:#fff"></div>
  <div class="a" style="left:2278px;top:32px;width:2px;height:40px;background:#555"></div>
  <svg class="a" style="left:2312px;top:30px" width="56" height="46" viewBox="0 0 56 46"><path d="M4 22 H17" stroke="#fff" stroke-width="4"/><path d="M18 5 V39 c6 0 9 -2 12 -5 c3 -2 6 -2 11 -1 c2 0 2 -1 2 -2 V12 c0 -1 0 -2 -2 -2 c-5 1 -8 1 -11 -1 c-3 -3 -6 -4 -12 -4z" fill="none" stroke="#fff" stroke-width="4" stroke-linejoin="round"/></svg>

  <!-- sidebar -->
  <div id="side" class="a"></div>
  <div class="a tab" style="left:1575px;color:#fff">视频</div>
  <div class="a tab" style="left:1733px">AI总结</div>
  <div class="a tab" style="left:1923px">文稿</div>
  <div class="a tab" style="left:2081px">AI课件</div>
  <div class="a" style="left:1590px;top:204px;width:35px;height:7px;border-radius:4px;background:#6e78ee"></div>
  <div class="a" style="left:1560px;top:256px;font-size:36px;font-weight:bold;color:#f4f4f4">视频</div>
  <div class="a" style="left:1560px;top:328px;font-size:26px;color:#969696;letter-spacing:0.1px">2025-10-22 15:48</div>
  <div class="a" style="left:2184px;top:318px;width:176px;height:48px;border-radius:10px;background:#262626"></div>
  <div class="a" style="left:2199px;top:326px;font-size:24px;color:#fff;white-space:nowrap">打开文件位置</div>
  <div class="a" style="left:1560px;top:415px;font-size:28px;color:#f4f4f4;-webkit-text-stroke:0.3px #f4f4f4">播放列表</div>
  <div id="list" class="a" style="left:1520px;top:470px;width:880px;height:880px;overflow:hidden"><div class="a item" style="left:0;top:-91px"><div class="a" style="left:40px;top:25px"><div class="th"><div class="a" style="left:0px;top:0px;width:246px;height:33px;background:#e9ebf0"></div><div class="a" style="left:3px;top:3px;width:112px;height:7px;background:repeating-linear-gradient(90deg,#dcdfe5 0 20px,transparent 20px 24px)"></div><div class="a" style="left:128px;top:3px;width:114px;height:7px;background:repeating-linear-gradient(90deg,#dcdfe5 0 20px,transparent 20px 24px)"></div><div class="a" style="left:44px;top:4px;width:16px;height:5px;background:#fff"></div><div class="a" style="left:170px;top:4px;width:34px;height:5px;background:#fff"></div><div class="a" style="left:4px;top:13px;width:110px;height:4px;background:repeating-linear-gradient(90deg,#bcc0c8 0 3px,transparent 3px 7px)"></div><div class="a" style="left:130px;top:13px;width:110px;height:4px;background:repeating-linear-gradient(90deg,#bcc0c8 0 3px,transparent 3px 7px)"></div><div class="a" style="left:4px;top:20px;width:110px;height:4px;background:repeating-linear-gradient(90deg,#c4c8cf 0 3px,transparent 3px 7px)"></div><div class="a" style="left:130px;top:20px;width:110px;height:4px;background:repeating-linear-gradient(90deg,#c4c8cf 0 3px,transparent 3px 7px)"></div><div class="a" style="left:0px;top:28px;width:246px;height:5px;background:repeating-linear-gradient(90deg,#d0d3da 0 1px,#f4f5f8 1px 4px)"></div><div class="a" style="left:0px;top:33px;width:246px;height:119px;background:#fff"></div><div class="a" style="left:122px;top:33px;width:8px;height:119px;background:#e8eaef"></div><div class="a tp" style="left:6px;top:36px;width:112px;height:118px;color:#3a3a3a;font-size:4.7px;line-height:7.4px;text-indent:2em"><span style="color:#2233cc">近日，邛崃市天府现代种业园内的上千亩水稻刚刚收获，稻田内铺满</span>了金黄的秸秆。金色的原野上，一<span style="color:#c0392b">栋栋展馆大楼拔地而起，和田野融</span>为一体。作为国家在西南首批布局的唯一国家级种业园区，邛崃市天府现代种业园堪称四川种业最强大脑。国庆假期，园区在建项目施工现场仍一片繁忙，工地上塔吊林立，工程车往来不断。早在2018<span style="color:#2233cc">年，邛崃市政府就抢抓先机，积极推进把第一批国家级种</span>业园落户邛崃，将其列为四川省十四五现代种业发展规划良种繁育能力提升工程的重要规划之一，为中国西南种业硅谷高端种业的集群发展，奠定了良好的基础。从园区成立以来，项目建设就如火如荼，作为全省唯一一个以大种业发展为基础的功能园区。了金黄的秸秆。金色的原野上，一栋栋展馆大楼拔地而起，和田野融为一体。作为国家在西南首批布局的唯一国家级种业园区，邛崃市天府现代种业园堪称四川种业最强大脑。国庆假期，园区在建项目施工现场仍一片繁忙，工地上塔吊林立，工程车往来不断。早在2018年，邛崃市政府就抢抓先机，积极推进把第一批国家级种业园落户邛崃，将其列为四川省十四五现代种业发展规划良种繁育能力提升工程的重要规划之一，为中国西南种业硅谷高端种业的集群发展，奠定了良好的基础。从园区成立以来，项目建设就如火如荼，作为全省唯一一个以大种业发展为基础的功能园区。为一体。作为国家在西南首批布局的唯一国家级种业园区，邛崃市天府现代种业园堪称四川种业最强大脑。国庆假期，园区在建项目施工现场仍一片繁忙，工地上塔吊林立，工程车往来不断。早在2018年，邛崃市政府就抢抓先机，积极推进把第一批国家级种业园落户邛崃，将其列为四川省十四五现代种业发展规划良种繁育能力提升工程的重要规划之一，为中国西南种业硅谷高端种业的集群发展，奠定了良好的基础。从园区成立以来，项目建设就如火如荼，作为全省唯一一个以大种业发展为基础的功能园区。</div><div class="a" style="left:10px;top:63px;width:60px;height:8px;background:rgba(150,150,150,.3)"></div><div class="a tp" style="left:134px;top:36px;width:106px;height:118px;color:#3a3a3a;font-size:4.7px;line-height:7.4px;text-indent:2em">近日，邛崃市天府现代种业园内的上千亩水稻<span style="color:#2233cc">刚刚收获，稻田内铺满了金黄的秸秆。金色的</span>原野上，一栋栋展馆大楼拔地而起，和田野融为一体。作为国家在西南首批布局的唯一国家级种业园区，邛崃市天<span style="color:#2233cc">府现代种业园堪称四川种业最强大脑。国庆假期，园区在建项目施工</span>现场仍一片繁忙，工地上塔吊林立，工程车往来不断。早在2018年，邛崃市政府就抢抓先机，积极推进把第一批国家级种业园落户邛崃，将其列为四川省十四五现代种业发展规划良种繁育能力提升工程的重要规划之一，为中国西南种业硅谷高端种业的集群发展，奠定了良好的基础。从园区成立以来，项目建设就如火如荼，作为全省唯一一个以大种业发展为基础的功能园区。了金黄的秸秆。金色的原野上，一栋栋展馆大楼拔地而起，和田野融为一体。作为国家在西南首批布局的唯一国家级种业园区，邛崃市天府现代种业园堪称四川种业最强大脑。国庆假期，园区在建项目施工现场仍一片繁忙，工地上塔吊林立，工程车往来不断。早在2018年，邛崃市政府就抢抓先机，积极推进把第一批国家级种业园落户邛崃，将其列为四川省十四五现代种业发展规划良种繁育能力提升工程的重要规划之一，为中国西南种业硅谷高端种业的集群发展，奠定了良好的基础。从园区成立以来，项目建设就如火如荼，作为全省唯一一个以大种业发展为基础的功能园区。为一体。作为国家在西南首批布局的唯一国家级种业园区，邛崃市天府现代种业园堪称四川种业最强大脑。国庆假期，园区在建项目施工现场仍一片繁忙，工地上塔吊林立，工程车往来不断。早在2018年，邛崃市政府就抢抓先机，积极推进把第一批国家级种业园落户邛崃，将其列为四川省十四五现代种业发展规划良种繁育能力提升工程的重要规划之一，为中国西南种业硅谷高端种业的集群发展，奠定了良好的基础。从园区成立以来，项目建设就如火如荼，作为全省唯一一个以大种业发展为基础的功能园区。</div><div class="a" style="left:0px;top:152px;width:246px;height:12px;background:#e2e5ec"></div><div class="a" style="left:0px;top:0px;width:246px;height:164px;background:linear-gradient(180deg,rgba(0,0,0,0) 66%,rgba(0,0,0,.30) 100%)"></div><div class="a dur">20:44</div></div></div><div class="a ititle">4.【第4题】调研报告<span class="dd">––</span>2023年四川乡镇<br>级第3题.mp4</div><div class="a iwatch">未观看</div></div><div class="a item" style="left:0;top:121px"><div class="a" style="left:40px;top:25px"><div class="th"><div class="a" style="left:0px;top:0px;width:246px;height:33px;background:#e9ebf0"></div><div class="a" style="left:3px;top:3px;width:112px;height:7px;background:repeating-linear-gradient(90deg,#dcdfe5 0 20px,transparent 20px 24px)"></div><div class="a" style="left:128px;top:3px;width:114px;height:7px;background:repeating-linear-gradient(90deg,#dcdfe5 0 20px,transparent 20px 24px)"></div><div class="a" style="left:44px;top:4px;width:16px;height:5px;background:#fff"></div><div class="a" style="left:170px;top:4px;width:34px;height:5px;background:#fff"></div><div class="a" style="left:4px;top:13px;width:110px;height:4px;background:repeating-linear-gradient(90deg,#bcc0c8 0 3px,transparent 3px 7px)"></div><div class="a" style="left:130px;top:13px;width:110px;height:4px;background:repeating-linear-gradient(90deg,#bcc0c8 0 3px,transparent 3px 7px)"></div><div class="a" style="left:4px;top:20px;width:110px;height:4px;background:repeating-linear-gradient(90deg,#c4c8cf 0 3px,transparent 3px 7px)"></div><div class="a" style="left:130px;top:20px;width:110px;height:4px;background:repeating-linear-gradient(90deg,#c4c8cf 0 3px,transparent 3px 7px)"></div><div class="a" style="left:0px;top:28px;width:246px;height:5px;background:repeating-linear-gradient(90deg,#d0d3da 0 1px,#f4f5f8 1px 4px)"></div><div class="a" style="left:0px;top:33px;width:246px;height:119px;background:#fff"></div><div class="a" style="left:122px;top:33px;width:8px;height:119px;background:#e8eaef"></div><div class="a tp" style="left:12px;top:36px;width:106px;height:116px;color:#3a3a3a;font-size:4.7px;line-height:7.4px;text-indent:0">近日，邛崃市天府现代<span style="color:#c0392b">种业园内的上千亩水稻刚刚收获</span>，稻田内铺满了金黄的秸秆。金色的原野上，一栋栋展馆大楼拔地而起，和田野融为一体。作为国家在西<span style="color:#c0392b">南首批布局的唯一国家级种业园</span>区，邛崃市天府现代种业园堪称四川种业最强大脑。国庆假期，园区在建项目施工现场仍一片繁忙，工地上塔吊林立，工程车往来不断。早在2018<span style="color:#c0392b">年，邛崃市政府就抢抓先机，积极推进把第一</span>批国家级种业园落户邛崃，将其列为四川省十四五现代种业发展规划良种繁育能力提升工程的重要规划之一，为中国西南种业硅谷高端种业的集群发展，奠定了良好的基础。从园区成立以来，项目建设就如火如荼，作为全省唯一一个以大种业发展为基础的功能园区。了金黄的秸秆。金色的原野上，一栋栋展馆大楼拔地而起，和田野融为一体。作为国家在西南首批布局的唯一国家级种业园区，邛崃市天府现代种业园堪称四川种业最强大脑。国庆假期，园区在建项目施工现场仍一片繁忙，工地上塔吊林立，工程车往来不断。早在2018年，邛崃市政府就抢抓先机，积极推进把第一批国家级种业园落户邛崃，将其列为四川省十四五现代种业发展规划良种繁育能力提升工程的重要规划之一，为中国西南种业硅谷高端种业的集群发展，奠定了良好的基础。从园区成立以来，项目建设就如火如荼，作为全省唯一一个以大种业发展为基础的功能园区。为一体。作为国家在西南首批布局的唯一国家级种业园区，邛崃市天府现代种业园堪称四川种业最强大脑。国庆假期，园区在建项目施工现场仍一片繁忙，工地上塔吊林立，工程车往来不断。早在2018年，邛崃市政府就抢抓先机，积极推进把第一批国家级种业园落户邛崃，将其列为四川省十四五现代种业发展规划良种繁育能力提升工程的重要规划之一，为中国西南种业硅谷高端种业的集群发展，奠定了良好的基础。从园区成立以来，项目建设就如火如荼，作为全省唯一一个以大种业发展为基础的功能园区。</div><div class="a" style="left:20px;top:66px;width:96px;height:8px;background:rgba(120,120,120,.25)"></div><div class="a tp" style="left:138px;top:45px;width:104px;height:70px;color:#3a3a3a;font-size:4.7px;line-height:7.4px;text-indent:2em">近日，邛崃市天府现代种业园内的上千亩水稻刚刚收获，稻田内铺满了金黄的秸秆。金色的<span style="color:#2a8ad0">原野上，一栋栋展馆大楼拔地而起，和田野融</span>为一体。作为国家在西南首批布局的唯一国家级种业园区，邛崃市天<span style="color:#c0392b">府现代种业园堪称四川种业最强大脑。国庆假</span>期，园区在建项目施工现场仍一片繁忙，工地上塔吊林立，工程车往来不断。早在2018年，邛崃市政府就抢抓先机，积极推进把第一批国家级种业园落户邛崃，将其列为四川省十四五现代种业发展规划良种繁育能力提升工程的重要规划之一，为中国西南种业硅谷高端种业的集群发展，奠定了良好的基础。从园区成立以来，项目建设就如火如荼，作为全省唯一一个以大种业发展为基础的功能园区。了金黄的秸秆。金色的原野上，一栋栋展馆大楼拔地而起，和田野融为一体。作为国家在西南首批布局的唯一国家级种业园区，邛崃市天府现代种业园堪称四川种业最强大脑。国庆假期，园区在建项目施工现场仍一片繁忙，工地上塔吊林立，工程车往来不断。早在2018年，邛崃市政府就抢抓先机，积极推进把第一批国家级种业园落户邛崃，将其列为四川省十四五现代种业发展规划良种繁育能力提升工程的重要规划之一，为中国西南种业硅谷高端种业的集群发展，奠定了良好的基础。从园区成立以来，项目建设就如火如荼，作为全省唯一一个以大种业发展为基础的功能园区。为一体。作为国家在西南首批布局的唯一国家级种业园区，邛崃市天府现代种业园堪称四川种业最强大脑。国庆假期，园区在建项目施工现场仍一片繁忙，工地上塔吊林立，工程车往来不断。早在2018年，邛崃市政府就抢抓先机，积极推进把第一批国家级种业园落户邛崃，将其列为四川省十四五现代种业发展规划良种繁育能力提升工程的重要规划之一，为中国西南种业硅谷高端种业的集群发展，奠定了良好的基础。从园区成立以来，项目建设就如火如荼，作为全省唯一一个以大种业发展为基础的功能园区。</div><div class="a" style="left:200px;top:65px;width:40px;height:75px;background:#fafafb;border:1px solid #e2e2e6"></div><div class="a" style="left:0px;top:152px;width:246px;height:12px;background:#e2e5ec"></div><div class="a" style="left:0px;top:0px;width:246px;height:164px;background:linear-gradient(180deg,rgba(0,0,0,0) 66%,rgba(0,0,0,.30) 100%)"></div><div class="a dur">24:40</div></div></div><div class="a ititle">5.【第5题】书面汇报<span class="dd">––</span>2023年贵州B卷第<br>3题.mp4</div><div class="a iwatch">未观看</div></div><div class="a item act" style="left:0;top:333px"><div class="a" style="left:40px;top:25px"><div class="th"><div class="a" style="left:0px;top:0px;width:246px;height:33px;background:#e9ebf0"></div><div class="a" style="left:3px;top:3px;width:112px;height:7px;background:repeating-linear-gradient(90deg,#dcdfe5 0 20px,transparent 20px 24px)"></div><div class="a" style="left:128px;top:3px;width:114px;height:7px;background:repeating-linear-gradient(90deg,#dcdfe5 0 20px,transparent 20px 24px)"></div><div class="a" style="left:44px;top:4px;width:16px;height:5px;background:#fff"></div><div class="a" style="left:170px;top:4px;width:34px;height:5px;background:#fff"></div><div class="a" style="left:4px;top:13px;width:110px;height:4px;background:repeating-linear-gradient(90deg,#bcc0c8 0 3px,transparent 3px 7px)"></div><div class="a" style="left:130px;top:13px;width:110px;height:4px;background:repeating-linear-gradient(90deg,#bcc0c8 0 3px,transparent 3px 7px)"></div><div class="a" style="left:4px;top:20px;width:110px;height:4px;background:repeating-linear-gradient(90deg,#c4c8cf 0 3px,transparent 3px 7px)"></div><div class="a" style="left:130px;top:20px;width:110px;height:4px;background:repeating-linear-gradient(90deg,#c4c8cf 0 3px,transparent 3px 7px)"></div><div class="a" style="left:0px;top:28px;width:246px;height:5px;background:repeating-linear-gradient(90deg,#d0d3da 0 1px,#f4f5f8 1px 4px)"></div><div class="a" style="left:0px;top:33px;width:246px;height:119px;background:#fff"></div><div class="a" style="left:122px;top:33px;width:8px;height:119px;background:#e8eaef"></div><div class="a tp" style="left:6px;top:34px;width:112px;height:118px;color:#3a3a3a;font-size:4.7px;line-height:7.4px;text-indent:0">近日，邛崃市天府现代种业园内的上千亩水稻<span style="color:#c0392b">刚刚收获，稻田内</span>铺满了金黄的秸秆。金色的原野上，一栋栋展馆大楼拔地而起，和田野融为一体。作为<span style="color:#3a9a50">国家在西南首批布局的唯一国家</span>级种业园区，邛崃市天府现代种业园堪称四川种业最强大脑。国庆假期，园区在建项目施工现场仍一片繁忙，工地上塔吊林立，工程车往来不断。早在2018<span style="color:#c0392b">年，邛崃市政府就抢抓</span>先机，积极推进把第一批国家级种业园落户邛崃，将其列为四川省十四五现代种业发展规划<span style="color:#c0392b">良种繁育能力提升工程的重</span>要规划之一，为中国西南种业硅谷高端种业的集群发展，奠定了良好的基础。从园区成立以来，项目建设就如火如荼，作为全省唯一一个以大种业发展为基础的功能园区。了金黄的秸秆。金色的原野上，一栋栋展馆大楼拔地而起，和田野融为一体。作为国家在西南首批布局的唯一国家级种业园区，邛崃市天府现代种业园堪称四川种业最强大脑。国庆假期，园区在建项目施工现场仍一片繁忙，工地上塔吊林立，工程车往来不断。早在2018年，邛崃市政府就抢抓先机，积极推进把第一批国家级种业园落户邛崃，将其列为四川省十四五现代种业发展规划良种繁育能力提升工程的重要规划之一，为中国西南种业硅谷高端种业的集群发展，奠定了良好的基础。从园区成立以来，项目建设就如火如荼，作为全省唯一一个以大种业发展为基础的功能园区。为一体。作为国家在西南首批布局的唯一国家级种业园区，邛崃市天府现代种业园堪称四川种业最强大脑。国庆假期，园区在建项目施工现场仍一片繁忙，工地上塔吊林立，工程车往来不断。早在2018年，邛崃市政府就抢抓先机，积极推进把第一批国家级种业园落户邛崃，将其列为四川省十四五现代种业发展规划良种繁育能力提升工程的重要规划之一，为中国西南种业硅谷高端种业的集群发展，奠定了良好的基础。从园区成立以来，项目建设就如火如荼，作为全省唯一一个以大种业发展为基础的功能园区。</div><div class="a tp" style="left:150px;top:45px;width:80px;height:8px;color:#3a3a3a;font-size:4.7px;line-height:7.4px;text-indent:0">四川省拟召开推进现代种业发展现场会</div><div class="a tp" style="left:152px;top:59px;width:80px;height:8px;color:#2233cc;font-size:4.7px;line-height:7.4px;text-indent:0">天府现代种业园推进现代种业发展现场</div><div class="a tp" style="left:134px;top:73px;width:104px;height:22px;color:#3a9a50;font-size:4.7px;line-height:7.4px;text-indent:2em">近日，邛崃市天府现代种业园内的上千亩水稻刚刚收获，稻田内铺满了金黄的秸秆。金色的原野上，一栋栋展馆大楼拔地而起，和田野融为一体。作为国家在西南首批布局的唯一国家级种业园区，邛崃市天府现代种业园堪称四川种业最强大脑。国庆假期，园区在建项目施工现场仍一片繁忙，工地上塔吊林立，工程车往来不断。早在2018年，邛崃市政府就抢抓先机，积极推进把第一批国家级种业园落户邛崃，将其列为四川省十四五现代种业发展规划良种繁育能力提升工程的重要规划之一，为中国西南种业硅谷高端种业的集群发展，奠定了良好的基础。从园区成立以来，项目建设就如火如荼，作为全省唯一一个以大种业发展为基础的功能园区。了金黄的秸秆。金色的原野上，一栋栋展馆大楼拔地而起，和田野融为一体。作为国家在西南首批布局的唯一国家级种业园区，邛崃市天府现代种业园堪称四川种业最强大脑。国庆假期，园区在建项目施工现场仍一片繁忙，工地上塔吊林立，工程车往来不断。早在2018年，邛崃市政府就抢抓先机，积极推进把第一批国家级种业园落户邛崃，将其列为四川省十四五现代种业发展规划良种繁育能力提升工程的重要规划之一，为中国西南种业硅谷高端种业的集群发展，奠定了良好的基础。从园区成立以来，项目建设就如火如荼，作为全省唯一一个以大种业发展为基础的功能园区。为一体。作为国家在西南首批布局的唯一国家级种业园区，邛崃市天府现代种业园堪称四川种业最强大脑。国庆假期，园区在建项目施工现场仍一片繁忙，工地上塔吊林立，工程车往来不断。早在2018年，邛崃市政府就抢抓先机，积极推进把第一批国家级种业园落户邛崃，将其列为四川省十四五现代种业发展规划良种繁育能力提升工程的重要规划之一，为中国西南种业硅谷高端种业的集群发展，奠定了良好的基础。从园区成立以来，项目建设就如火如荼，作为全省唯一一个以大种业发展为基础的功能园区。</div><div class="a" style="left:0px;top:152px;width:246px;height:12px;background:#e2e5ec"></div><div class="a" style="left:0px;top:0px;width:246px;height:164px;background:linear-gradient(180deg,rgba(0,0,0,0) 66%,rgba(0,0,0,.30) 100%)"></div><div class="a dur">30:20</div></div></div><svg class="a" style="left:313px;top:46px" width="26" height="24"><rect x="0.3" y="0" width="5.3" height="24" rx="2.6" fill="#6e7cf5"/><rect x="10.7" y="6.2" width="5.2" height="11.5" rx="2.6" fill="#6e7cf5"/><rect x="20.3" y="3.8" width="5.3" height="16.2" rx="2.6" fill="#6e7cf5"/></svg><div class="a ititle" style="color:#6e7cf5"><span style="margin-left:44px">6.</span>【第6题】发言稿<span class="dd">––</span>24四川县乡卷第<br>3题.mp4</div><div class="a iwatch">未观看</div></div><div class="a item" style="left:0;top:545px"><div class="a" style="left:40px;top:25px"><div class="th"><div class="a" style="left:0px;top:0px;width:246px;height:22px;background:#e9ebf0"></div><div class="a" style="left:4px;top:2px;width:110px;height:4px;background:repeating-linear-gradient(90deg,#bcc0c8 0 3px,transparent 3px 7px)"></div><div class="a" style="left:130px;top:2px;width:110px;height:4px;background:repeating-linear-gradient(90deg,#bcc0c8 0 3px,transparent 3px 7px)"></div><div class="a" style="left:4px;top:9px;width:110px;height:4px;background:repeating-linear-gradient(90deg,#c4c8cf 0 3px,transparent 3px 7px)"></div><div class="a" style="left:130px;top:9px;width:110px;height:4px;background:repeating-linear-gradient(90deg,#c4c8cf 0 3px,transparent 3px 7px)"></div><div class="a" style="left:0px;top:17px;width:246px;height:5px;background:repeating-linear-gradient(90deg,#d0d3da 0 1px,#f4f5f8 1px 4px)"></div><div class="a" style="left:0px;top:22px;width:246px;height:130px;background:#fff"></div><div class="a" style="left:122px;top:22px;width:8px;height:130px;background:#e8eaef"></div><div class="a tp" style="left:0px;top:24px;width:116px;height:122px;color:#3a3a3a;font-size:4.7px;line-height:7.4px;text-indent:0"><span style="color:#c0392b">近日，邛崃市天府现代种业园内的上千亩水稻</span>刚刚收获，稻田内铺满了金黄的秸秆。金色的原野上，一栋栋展馆大楼拔地而起，和田野融<span style="color:#3a9a50">为一体。作为国家在西南首</span>批布局的唯一国家级种业园区，邛崃市天府现代种业园堪称四川种业最强大脑。国庆假期，园区在建项目施工<span style="color:#c0392b">现场仍一片繁忙，工地上塔吊林立，工程车往</span>来不断。早在2018年，邛崃市政府就抢抓先机，积极推进把第一批国家级种业园落户邛崃，将其列为四川省十四五现代种业发展规划良种繁育能力提升工程的重要规划之一，为中国西南种业硅谷高端种业的集群发展，奠定了良好的基础。从园区成立以来，项目建设就如火如荼，作为全省唯一一个以大种业发展为基础的功能园区。了金黄的秸秆。金色的原野上，一栋栋展馆大楼拔地而起，和田野融为一体。作为国家在西南首批布局的唯一国家级种业园区，邛崃市天府现代种业园堪称四川种业最强大脑。国庆假期，园区在建项目施工现场仍一片繁忙，工地上塔吊林立，工程车往来不断。早在2018年，邛崃市政府就抢抓先机，积极推进把第一批国家级种业园落户邛崃，将其列为四川省十四五现代种业发展规划良种繁育能力提升工程的重要规划之一，为中国西南种业硅谷高端种业的集群发展，奠定了良好的基础。从园区成立以来，项目建设就如火如荼，作为全省唯一一个以大种业发展为基础的功能园区。为一体。作为国家在西南首批布局的唯一国家级种业园区，邛崃市天府现代种业园堪称四川种业最强大脑。国庆假期，园区在建项目施工现场仍一片繁忙，工地上塔吊林立，工程车往来不断。早在2018年，邛崃市政府就抢抓先机，积极推进把第一批国家级种业园落户邛崃，将其列为四川省十四五现代种业发展规划良种繁育能力提升工程的重要规划之一，为中国西南种业硅谷高端种业的集群发展，奠定了良好的基础。从园区成立以来，项目建设就如火如荼，作为全省唯一一个以大种业发展为基础的功能园区。</div><div class="a" style="left:0px;top:92px;width:104px;height:28px;background:rgba(150,150,150,.35)"></div><div class="a" style="left:4px;top:96px;width:22px;height:7px;background:rgba(240,224,60,.8)"></div><div class="a tp" style="left:134px;top:26px;width:106px;height:120px;color:#3a3a3a;font-size:4.7px;line-height:7.4px;text-indent:2em">近日，邛崃市天府现代种业园内的上千亩水稻刚刚收获，稻田内铺满了金黄的秸秆。金色的原野上，一栋栋展馆大楼拔地而起，和田野融<span style="color:#3a9a50">为一体。作为国家在西南首批布局的唯一国家</span>级种业园区，邛崃市天府现代种业园堪称四川种业最强大脑。国庆假期，园区在建项目施工现场仍一片繁忙，工地上塔吊林立，工程车往来不断。早在2018<span style="color:#c0392b">年，邛崃市政府就抢抓先机，积极推进把第一</span>批国家级种业园落户邛崃，将其列为四川省十四五现代种业发展规划良种繁育能力提升工程的重要规划之一，为中国西南种业硅谷高端种业的集群发展，奠定了良好的基础。从园区成立以来，项目建设就如火如荼，作为全省唯一一个以大种业发展为基础的功能园区。了金黄的秸秆。金色的原野上，一栋栋展馆大楼拔地而起，和田野融为一体。作为国家在西南首批布局的唯一国家级种业园区，邛崃市天府现代种业园堪称四川种业最强大脑。国庆假期，园区在建项目施工现场仍一片繁忙，工地上塔吊林立，工程车往来不断。早在2018年，邛崃市政府就抢抓先机，积极推进把第一批国家级种业园落户邛崃，将其列为四川省十四五现代种业发展规划良种繁育能力提升工程的重要规划之一，为中国西南种业硅谷高端种业的集群发展，奠定了良好的基础。从园区成立以来，项目建设就如火如荼，作为全省唯一一个以大种业发展为基础的功能园区。为一体。作为国家在西南首批布局的唯一国家级种业园区，邛崃市天府现代种业园堪称四川种业最强大脑。国庆假期，园区在建项目施工现场仍一片繁忙，工地上塔吊林立，工程车往来不断。早在2018年，邛崃市政府就抢抓先机，积极推进把第一批国家级种业园落户邛崃，将其列为四川省十四五现代种业发展规划良种繁育能力提升工程的重要规划之一，为中国西南种业硅谷高端种业的集群发展，奠定了良好的基础。从园区成立以来，项目建设就如火如荼，作为全省唯一一个以大种业发展为基础的功能园区。</div><div class="a" style="left:178px;top:29px;width:14px;height:6px;background:rgba(240,224,60,.8)"></div><div class="a" style="left:176px;top:62px;width:44px;height:66px;background:#fafafb;border:1px solid #e2e2e6"></div><div class="a" style="left:0px;top:152px;width:246px;height:12px;background:#e2e5ec"></div><div class="a" style="left:0px;top:0px;width:246px;height:164px;background:linear-gradient(180deg,rgba(0,0,0,0) 66%,rgba(0,0,0,.30) 100%)"></div><div class="a dur">19:52</div></div></div><div class="a ititle">7.【第7题】案例介绍<span class="dd">––</span>2023陕西B卷第4<br>题.mp4</div><div class="a iwatch">未观看</div></div><div class="a item" style="left:0;top:757px"><div class="a" style="left:40px;top:25px"><div class="th"><div class="a" style="left:0px;top:0px;width:246px;height:33px;background:#e9ebf0"></div><div class="a" style="left:3px;top:3px;width:112px;height:7px;background:repeating-linear-gradient(90deg,#dcdfe5 0 20px,transparent 20px 24px)"></div><div class="a" style="left:128px;top:3px;width:114px;height:7px;background:repeating-linear-gradient(90deg,#dcdfe5 0 20px,transparent 20px 24px)"></div><div class="a" style="left:44px;top:4px;width:16px;height:5px;background:#fff"></div><div class="a" style="left:170px;top:4px;width:34px;height:5px;background:#fff"></div><div class="a" style="left:4px;top:13px;width:110px;height:4px;background:repeating-linear-gradient(90deg,#bcc0c8 0 3px,transparent 3px 7px)"></div><div class="a" style="left:130px;top:13px;width:110px;height:4px;background:repeating-linear-gradient(90deg,#bcc0c8 0 3px,transparent 3px 7px)"></div><div class="a" style="left:4px;top:20px;width:110px;height:4px;background:repeating-linear-gradient(90deg,#c4c8cf 0 3px,transparent 3px 7px)"></div><div class="a" style="left:130px;top:20px;width:110px;height:4px;background:repeating-linear-gradient(90deg,#c4c8cf 0 3px,transparent 3px 7px)"></div><div class="a" style="left:0px;top:28px;width:246px;height:5px;background:repeating-linear-gradient(90deg,#d0d3da 0 1px,#f4f5f8 1px 4px)"></div><div class="a" style="left:0px;top:33px;width:246px;height:119px;background:#fff"></div><div class="a" style="left:122px;top:33px;width:8px;height:119px;background:#e8eaef"></div><div class="a tp" style="left:10px;top:36px;width:108px;height:118px;color:#3a3a3a;font-size:4.7px;line-height:7.4px;text-indent:2em">近日，邛崃<span style="color:#c0392b">市天府现代种业园内的</span>上千亩水稻刚刚收获，稻田内铺满了金黄的秸秆。金色的原野上，一栋栋展馆大楼拔地而起，和田野融为一体。作为国家在西南首批布局的唯一国家级种业园区，邛崃市天府现代种业园堪称四川<span style="color:#c0392b">种业最强大脑。国庆假期，园区在</span>建项目施工现场仍一片繁忙，工地上塔吊林立，工程车往来不断。早在2018年，邛崃市政府就抢抓<span style="color:#c0392b">先机，积极推进把第一批国家级种</span>业园落户邛崃，将其列为四川省十四五现代种业发展规划良种繁育能力提升工程的重要规划之一，为中国西南种业硅谷高端种业的集群发展，奠定了良好的基础。从园区成立以来，项目建设就如火如荼，作为全省唯一一个以大种业发展为基础的功能园区。了金黄的秸秆。金色的原野上，一栋栋展馆大楼拔地而起，和田野融为一体。作为国家在西南首批布局的唯一国家级种业园区，邛崃市天府现代种业园堪称四川种业最强大脑。国庆假期，园区在建项目施工现场仍一片繁忙，工地上塔吊林立，工程车往来不断。早在2018年，邛崃市政府就抢抓先机，积极推进把第一批国家级种业园落户邛崃，将其列为四川省十四五现代种业发展规划良种繁育能力提升工程的重要规划之一，为中国西南种业硅谷高端种业的集群发展，奠定了良好的基础。从园区成立以来，项目建设就如火如荼，作为全省唯一一个以大种业发展为基础的功能园区。为一体。作为国家在西南首批布局的唯一国家级种业园区，邛崃市天府现代种业园堪称四川种业最强大脑。国庆假期，园区在建项目施工现场仍一片繁忙，工地上塔吊林立，工程车往来不断。早在2018年，邛崃市政府就抢抓先机，积极推进把第一批国家级种业园落户邛崃，将其列为四川省十四五现代种业发展规划良种繁育能力提升工程的重要规划之一，为中国西南种业硅谷高端种业的集群发展，奠定了良好的基础。从园区成立以来，项目建设就如火如荼，作为全省唯一一个以大种业发展为基础的功能园区。</div><div class="a tp" style="left:136px;top:36px;width:100px;height:16px;color:#3a3a3a;font-size:4.7px;line-height:7.4px;text-indent:0">近日，邛崃市天府现代种业园内的上千亩水稻刚刚收获，稻田内铺满了金黄的秸秆。金色的原野上，一栋栋展馆大楼拔地而起，和田野融为一体。作为国家在西南首批布局的唯一国家级种业园区，邛崃市天府现代种业园堪称四川种业最强大脑。国庆假期，园区在建项目施工现场仍一片繁忙，工地上塔吊林立，工程车往来不断。早在2018年，邛崃市政府就抢抓先机，积极推进把第一批国家级种业园落户邛崃，将其列为四川省十四五现代种业发展规划良种繁育能力提升工程的重要规划之一，为中国西南种业硅谷高端种业的集群发展，奠定了良好的基础。从园区成立以来，项目建设就如火如荼，作为全省唯一一个以大种业发展为基础的功能园区。了金黄的秸秆。金色的原野上，一栋栋展馆大楼拔地而起，和田野融为一体。作为国家在西南首批布局的唯一国家级种业园区，邛崃市天府现代种业园堪称四川种业最强大脑。国庆假期，园区在建项目施工现场仍一片繁忙，工地上塔吊林立，工程车往来不断。早在2018年，邛崃市政府就抢抓先机，积极推进把第一批国家级种业园落户邛崃，将其列为四川省十四五现代种业发展规划良种繁育能力提升工程的重要规划之一，为中国西南种业硅谷高端种业的集群发展，奠定了良好的基础。从园区成立以来，项目建设就如火如荼，作为全省唯一一个以大种业发展为基础的功能园区。为一体。作为国家在西南首批布局的唯一国家级种业园区，邛崃市天府现代种业园堪称四川种业最强大脑。国庆假期，园区在建项目施工现场仍一片繁忙，工地上塔吊林立，工程车往来不断。早在2018年，邛崃市政府就抢抓先机，积极推进把第一批国家级种业园落户邛崃，将其列为四川省十四五现代种业发展规划良种繁育能力提升工程的重要规划之一，为中国西南种业硅谷高端种业的集群发展，奠定了良好的基础。从园区成立以来，项目建设就如火如荼，作为全省唯一一个以大种业发展为基础的功能园区。</div><div class="a tp" style="left:140px;top:63px;width:50px;height:30px;color:#3a3a3a;font-size:4.7px;line-height:7.4px;text-indent:0">近日，邛崃市天府现代种业园内的上千亩水稻刚刚收获，稻田内铺满了金黄的秸秆。金色的原野上，一栋栋展馆大楼拔地而起，和田野融为一体。作为国家在西南首批布局的唯一国家级种业园区，邛崃市天府现代种业园堪称四川种业最强大脑。国庆假期，园区在建项目施工现场仍一片繁忙，工地上塔吊林立，工程车往来不断。早在2018年，邛崃市政府就抢抓先机，积极推进把第一批国家级种业园落户邛崃，将其列为四川省十四五现代种业发展规划良种繁育能力提升工程的重要规划之一，为中国西南种业硅谷高端种业的集群发展，奠定了良好的基础。从园区成立以来，项目建设就如火如荼，作为全省唯一一个以大种业发展为基础的功能园区。了金黄的秸秆。金色的原野上，一栋栋展馆大楼拔地而起，和田野融为一体。作为国家在西南首批布局的唯一国家级种业园区，邛崃市天府现代种业园堪称四川种业最强大脑。国庆假期，园区在建项目施工现场仍一片繁忙，工地上塔吊林立，工程车往来不断。早在2018年，邛崃市政府就抢抓先机，积极推进把第一批国家级种业园落户邛崃，将其列为四川省十四五现代种业发展规划良种繁育能力提升工程的重要规划之一，为中国西南种业硅谷高端种业的集群发展，奠定了良好的基础。从园区成立以来，项目建设就如火如荼，作为全省唯一一个以大种业发展为基础的功能园区。为一体。作为国家在西南首批布局的唯一国家级种业园区，邛崃市天府现代种业园堪称四川种业最强大脑。国庆假期，园区在建项目施工现场仍一片繁忙，工地上塔吊林立，工程车往来不断。早在2018年，邛崃市政府就抢抓先机，积极推进把第一批国家级种业园落户邛崃，将其列为四川省十四五现代种业发展规划良种繁育能力提升工程的重要规划之一，为中国西南种业硅谷高端种业的集群发展，奠定了良好的基础。从园区成立以来，项目建设就如火如荼，作为全省唯一一个以大种业发展为基础的功能园区。</div><div class="a" style="left:184px;top:103px;width:14px;height:6px;background:#70d8f0"></div><div class="a" style="left:0px;top:152px;width:246px;height:12px;background:#e2e5ec"></div><div class="a" style="left:0px;top:0px;width:246px;height:164px;background:linear-gradient(180deg,rgba(0,0,0,0) 66%,rgba(0,0,0,.30) 100%)"></div><div class="a dur">25:12</div></div></div><div class="a ititle">8.【第8题】宣传稿<span class="dd">––</span>2023年山西县乡卷<br>第4题.mp4</div><div class="a iwatch">未观看</div></div></div>
  <div class="a" style="left:2388px;top:505px;width:8px;height:401px;border-radius:4px;background:#5a5a5a;box-shadow:0 0 0 1px #0c0c0c"></div>
<div id="bord"></div>
</div>
</body></html>
